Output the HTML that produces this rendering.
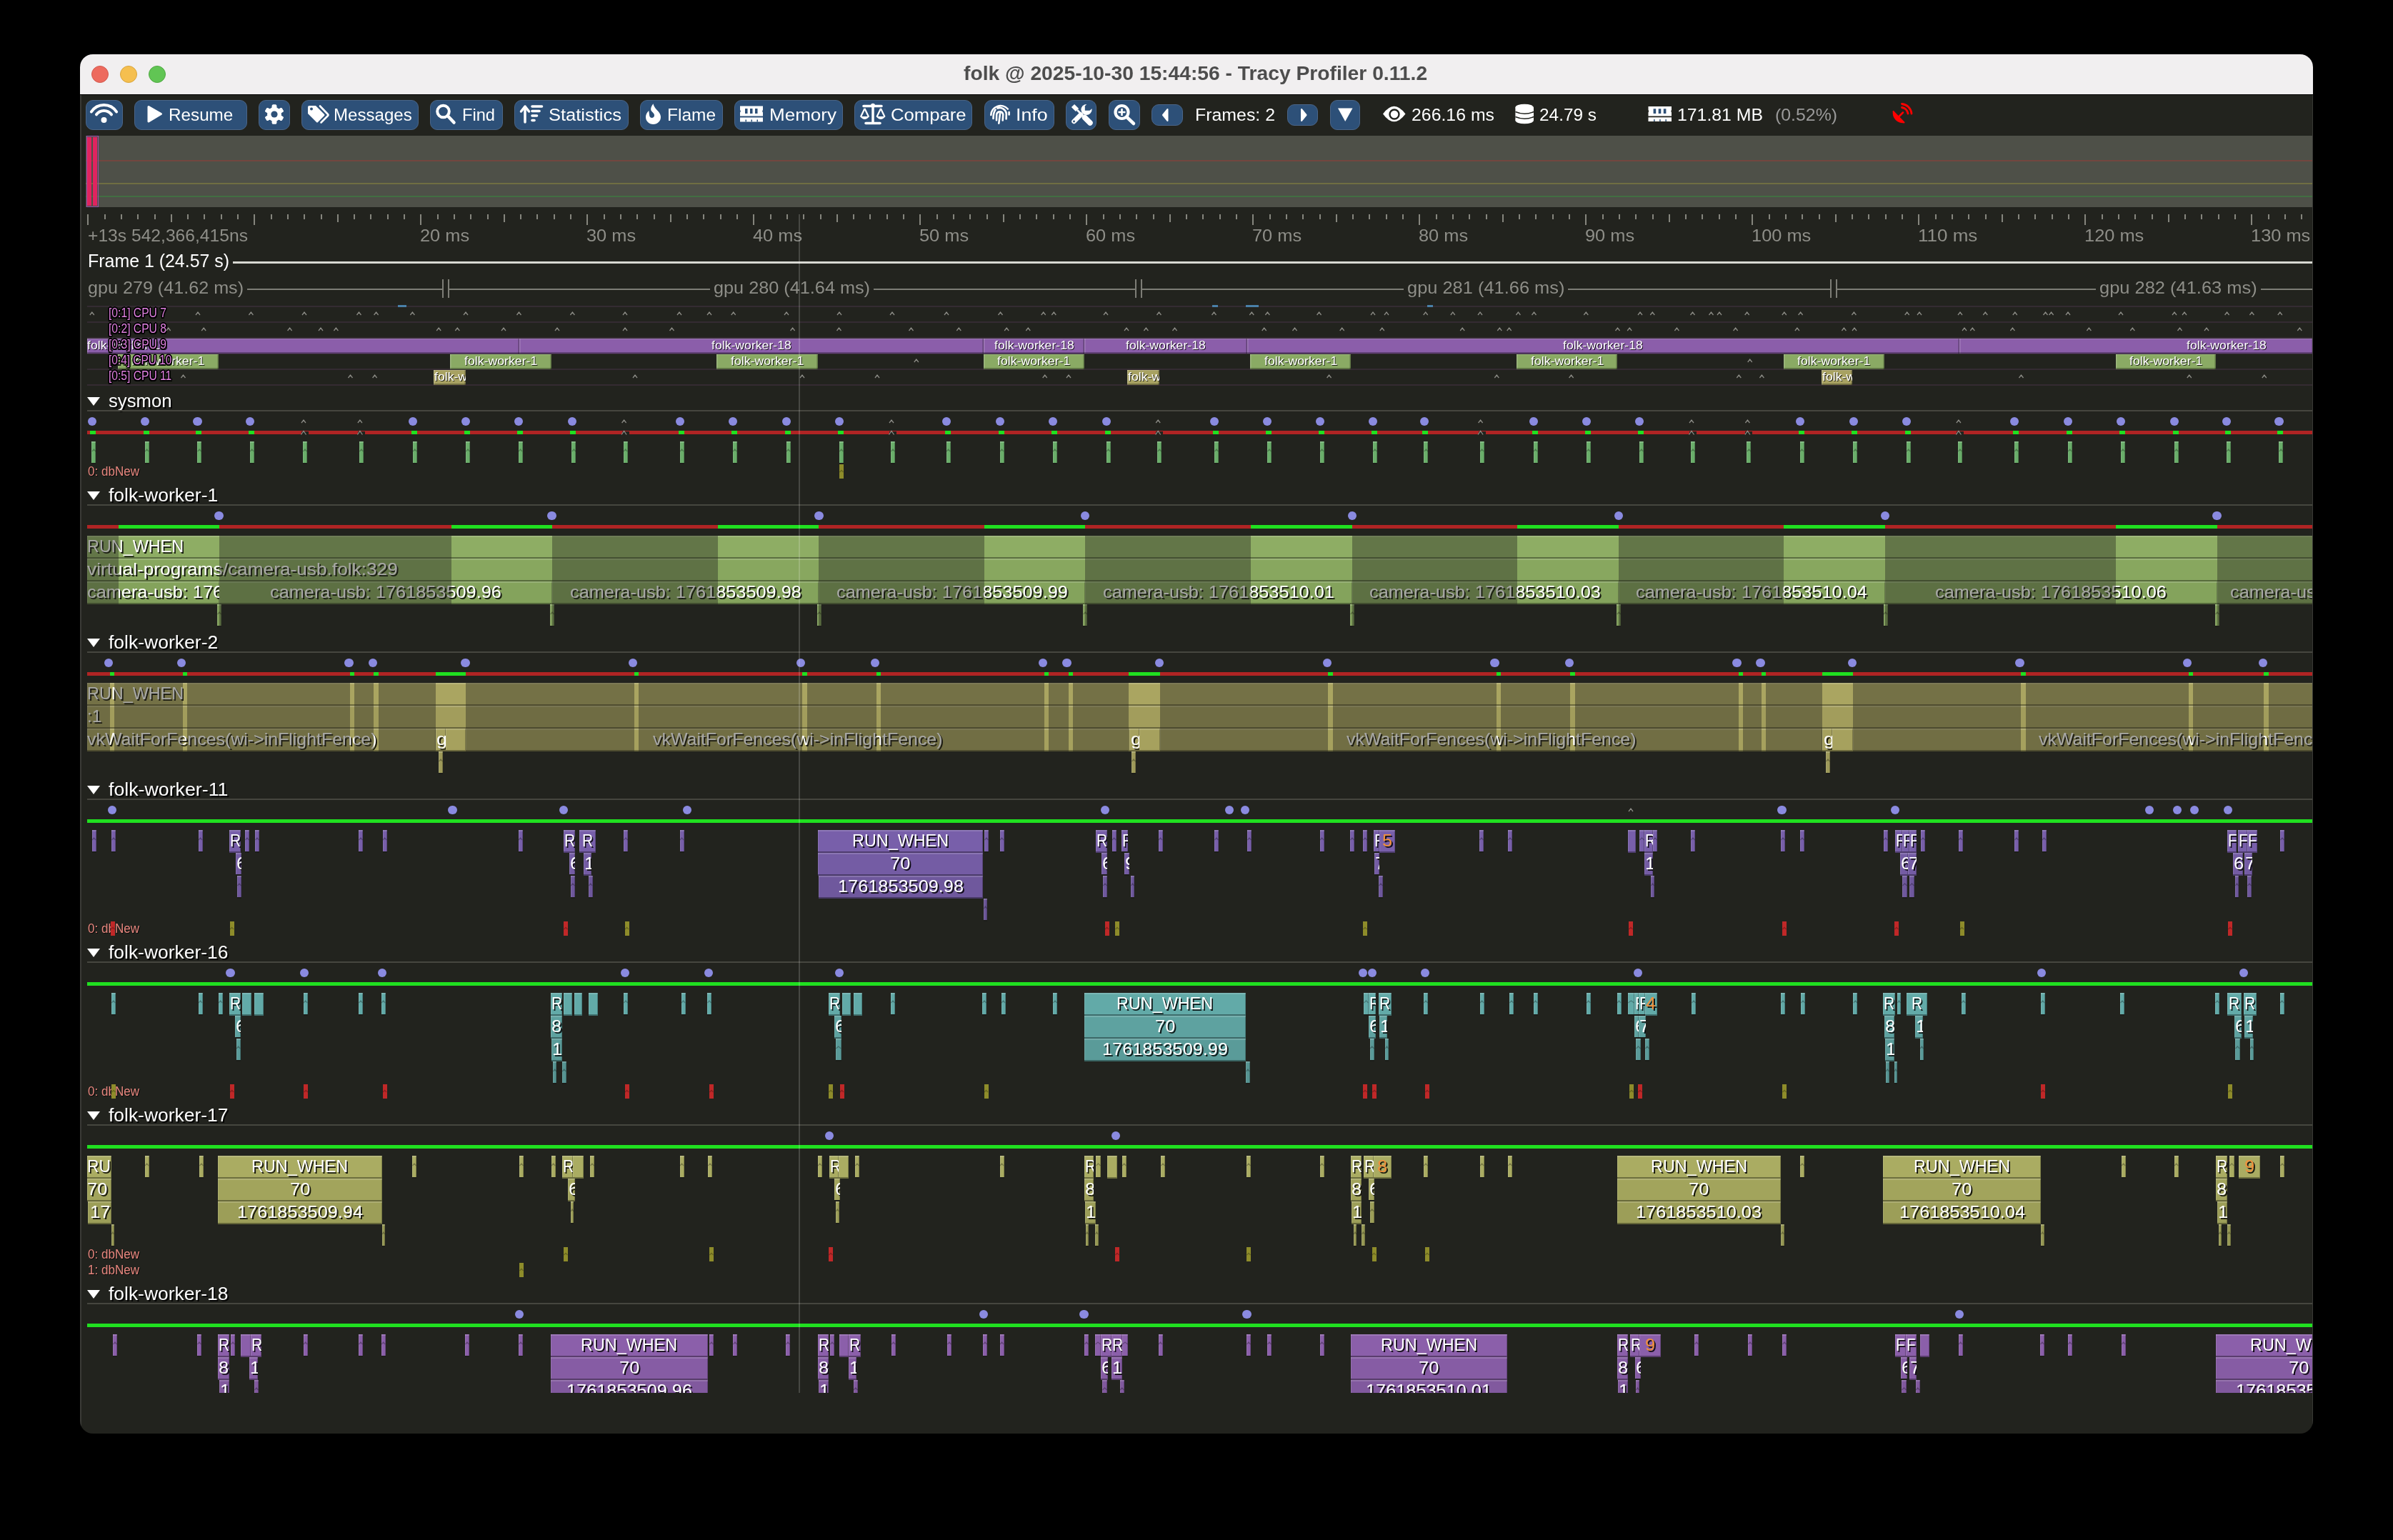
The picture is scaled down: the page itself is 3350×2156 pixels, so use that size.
<!DOCTYPE html><html><head><meta charset="utf-8"><style>
html,body{margin:0;padding:0;background:#000;width:3350px;height:2156px;overflow:hidden}
#win{position:absolute;left:0;top:0;width:3350px;height:2156px;clip-path:inset(76px 112px 149px 112px round 18px);will-change:transform}
#win div{position:absolute;box-sizing:content-box}
#bg{left:112px;top:76px;width:3126px;height:1931px;background:#22231e}
.t{transform-origin:0 0;white-space:nowrap;line-height:1;font-family:"Liberation Sans",sans-serif}
.title{font-weight:bold}
.btn{background:#2d5078;border:1px solid #4a6588;border-radius:10px}
.cb{overflow:hidden;box-shadow:inset 0 1px 0 rgba(255,255,255,0.18),inset 0 -2px 0 rgba(0,0,0,0.3),inset 1.5px 0 0 rgba(255,255,255,0.18),inset -1.5px 0 0 rgba(0,0,0,0.3)}
.ct{transform-origin:0 0;position:absolute;white-space:nowrap;font-family:"Liberation Sans",sans-serif;font-size:17px;line-height:19px;color:#fff;text-shadow:1px 1px 0 rgba(0,0,0,0.8)}
.cl{text-shadow:-1.5px -1.5px 0 #000,1.5px -1.5px 0 #000,-1.5px 1.5px 0 #000,1.5px 1.5px 0 #000,0 2px 0 #000,2px 0 0 #000,-2px 0 0 #000,0 -2px 0 #000}
.th{text-shadow:2px 2px 0 rgba(0,0,0,0.85)}
.lk{text-shadow:1px 1px 0 rgba(0,0,0,0.8)}
.tri{width:0;height:0;border-left:9px solid transparent;border-right:9px solid transparent;border-top:12px solid #fff}
.dot{width:12.4px;height:12.4px;border-radius:50%;background:#8a8ae0}
.z{height:30px;border-bottom:2px solid rgba(0,0,0,0.35);overflow:hidden;box-shadow:inset 0 2px 0 rgba(255,255,255,0.16),inset 1px 0 0 rgba(255,255,255,0.12),inset -1px 0 0 rgba(0,0,0,0.25)}
.zn{background-clip:padding-box;border-bottom-color:rgba(0,0,0,0.15)}
.zt{transform-origin:0 0;position:absolute;top:0;white-space:nowrap;font-family:"Liberation Sans",sans-serif;font-size:24.5px;line-height:30px;color:#fff;text-shadow:2px 2px 0 rgba(0,0,0,0.85)}
</style></head><body><div id="win"><div id="bg"></div><div style="left:112px;top:76px;width:3126px;height:56px;background:#f1eff0;"></div><div style="left:112px;top:132px;width:3126px;height:1px;background:#000;"></div><div style="left:128px;top:92px;width:24px;height:24px;border-radius:12px;background:#ed6a5e;box-sizing:border-box;border:1px solid #d35a4f"></div><div style="left:168px;top:92px;width:24px;height:24px;border-radius:12px;background:#f5bf4f;box-sizing:border-box;border:1px solid #d9a53c"></div><div style="left:208px;top:92px;width:24px;height:24px;border-radius:12px;background:#61c554;box-sizing:border-box;border:1px solid #4fa942"></div><div class="t title" style="left:1349px;top:88.8px;font-size:28px;color:#4d4d4d;transform:scaleX(1.0084);">folk @ 2025-10-30 15:44:56 - Tracy Profiler 0.11.2</div><div class="btn" style="left:120px;top:140px;width:50px;height:40px"></div><div class="btn" style="left:188px;top:140px;width:156px;height:40px"></div><div class="btn" style="left:362px;top:140px;width:42px;height:40px"></div><div class="btn" style="left:422px;top:140px;width:162px;height:40px"></div><div class="btn" style="left:602px;top:140px;width:100px;height:40px"></div><div class="btn" style="left:720px;top:140px;width:158px;height:40px"></div><div class="btn" style="left:896px;top:140px;width:114px;height:40px"></div><div class="btn" style="left:1028px;top:140px;width:150px;height:40px"></div><div class="btn" style="left:1196px;top:140px;width:163px;height:40px"></div><div class="btn" style="left:1378px;top:140px;width:96px;height:40px"></div><div class="btn" style="left:1492px;top:140px;width:41px;height:40px"></div><div class="btn" style="left:1552px;top:140px;width:42px;height:40px"></div><div class="btn" style="left:1612px;top:146px;width:42px;height:28px"></div><div class="btn" style="left:1802px;top:146px;width:41px;height:28px"></div><div class="btn" style="left:1862px;top:140px;width:40px;height:40px"></div><div class="t tb" style="left:236px;top:149.26px;font-size:24.5px;color:#fff;transform:scaleX(0.9899);">Resume</div><div class="t tb" style="left:467px;top:149.26px;font-size:24.5px;color:#fff;transform:scaleX(0.9825);">Messages</div><div class="t tb" style="left:647px;top:149.26px;font-size:24.5px;color:#fff;transform:scaleX(0.9652);">Find</div><div class="t tb" style="left:768px;top:149.26px;font-size:24.5px;color:#fff;transform:scaleX(1.0406);">Statistics</div><div class="t tb" style="left:934px;top:149.26px;font-size:24.5px;color:#fff;transform:scaleX(0.9991);">Flame</div><div class="t tb" style="left:1077px;top:149.26px;font-size:24.5px;color:#fff;transform:scaleX(1.0625);">Memory</div><div class="t tb" style="left:1247px;top:149.26px;font-size:24.5px;color:#fff;transform:scaleX(1.0474);">Compare</div><div class="t tb" style="left:1422px;top:149.26px;font-size:24.5px;color:#fff;transform:scaleX(1.0915);">Info</div><div class="t tb" style="left:1673px;top:149.26px;font-size:24.5px;color:#fff;transform:scaleX(1.0157);">Frames: 2</div><div class="t tb" style="left:1976px;top:149.26px;font-size:24.5px;color:#fff;transform:scaleX(1.0141);">266.16 ms</div><div class="t tb" style="left:2155px;top:149.26px;font-size:24.5px;color:#fff;transform:scaleX(0.9955);">24.79 s</div><div class="t tb" style="left:2348px;top:149.26px;font-size:24.5px;color:#fff;transform:scaleX(1.0128);">171.81 MB</div><div class="t tb" style="left:2485px;top:149.26px;font-size:24.5px;color:#9a9a9a;transform:scaleX(1.0142);">(0.52%)</div><div style="left:120px;top:190px;width:3118px;height:100px;background:#4e5048;"></div><div style="left:120px;top:224px;width:3118px;height:2px;background:#73463f;"></div><div style="left:120px;top:256px;width:3118px;height:2px;background:#6f6e42;"></div><div style="left:120px;top:274px;width:3118px;height:2px;background:#426e42;"></div><div style="left:121px;top:190px;width:17px;height:100px;background:transparent;box-sizing:border-box;border:1px solid #9a50a8"></div><div style="left:122px;top:192px;width:6px;height:96px;background:#e0245f;"></div><div style="left:130px;top:192px;width:6px;height:96px;background:#e0245f;"></div><div style="left:122.3px;top:300px;width:2px;height:14.5px;background:#85857d;"></div><div style="left:145.6px;top:300px;width:2px;height:6.5px;background:#85857d;"></div><div style="left:168.9px;top:300px;width:2px;height:6.5px;background:#85857d;"></div><div style="left:192.2px;top:300px;width:2px;height:6.5px;background:#85857d;"></div><div style="left:215.5px;top:300px;width:2px;height:6.5px;background:#85857d;"></div><div style="left:238.8px;top:300px;width:2px;height:11px;background:#85857d;"></div><div style="left:262.1px;top:300px;width:2px;height:6.5px;background:#85857d;"></div><div style="left:285.4px;top:300px;width:2px;height:6.5px;background:#85857d;"></div><div style="left:308.7px;top:300px;width:2px;height:6.5px;background:#85857d;"></div><div style="left:332px;top:300px;width:2px;height:6.5px;background:#85857d;"></div><div style="left:355.3px;top:300px;width:2px;height:14.5px;background:#85857d;"></div><div style="left:378.6px;top:300px;width:2px;height:6.5px;background:#85857d;"></div><div style="left:401.9px;top:300px;width:2px;height:6.5px;background:#85857d;"></div><div style="left:425.2px;top:300px;width:2px;height:6.5px;background:#85857d;"></div><div style="left:448.5px;top:300px;width:2px;height:6.5px;background:#85857d;"></div><div style="left:471.8px;top:300px;width:2px;height:11px;background:#85857d;"></div><div style="left:495.1px;top:300px;width:2px;height:6.5px;background:#85857d;"></div><div style="left:518.4px;top:300px;width:2px;height:6.5px;background:#85857d;"></div><div style="left:541.7px;top:300px;width:2px;height:6.5px;background:#85857d;"></div><div style="left:565px;top:300px;width:2px;height:6.5px;background:#85857d;"></div><div style="left:588.3px;top:300px;width:2px;height:14.5px;background:#85857d;"></div><div style="left:611.6px;top:300px;width:2px;height:6.5px;background:#85857d;"></div><div style="left:634.9px;top:300px;width:2px;height:6.5px;background:#85857d;"></div><div style="left:658.2px;top:300px;width:2px;height:6.5px;background:#85857d;"></div><div style="left:681.5px;top:300px;width:2px;height:6.5px;background:#85857d;"></div><div style="left:704.8px;top:300px;width:2px;height:11px;background:#85857d;"></div><div style="left:728.1px;top:300px;width:2px;height:6.5px;background:#85857d;"></div><div style="left:751.4px;top:300px;width:2px;height:6.5px;background:#85857d;"></div><div style="left:774.7px;top:300px;width:2px;height:6.5px;background:#85857d;"></div><div style="left:798px;top:300px;width:2px;height:6.5px;background:#85857d;"></div><div style="left:821.3px;top:300px;width:2px;height:14.5px;background:#85857d;"></div><div style="left:844.6px;top:300px;width:2px;height:6.5px;background:#85857d;"></div><div style="left:867.9px;top:300px;width:2px;height:6.5px;background:#85857d;"></div><div style="left:891.2px;top:300px;width:2px;height:6.5px;background:#85857d;"></div><div style="left:914.5px;top:300px;width:2px;height:6.5px;background:#85857d;"></div><div style="left:937.8px;top:300px;width:2px;height:11px;background:#85857d;"></div><div style="left:961.1px;top:300px;width:2px;height:6.5px;background:#85857d;"></div><div style="left:984.4px;top:300px;width:2px;height:6.5px;background:#85857d;"></div><div style="left:1007.7px;top:300px;width:2px;height:6.5px;background:#85857d;"></div><div style="left:1031px;top:300px;width:2px;height:6.5px;background:#85857d;"></div><div style="left:1054.3px;top:300px;width:2px;height:14.5px;background:#85857d;"></div><div style="left:1077.6px;top:300px;width:2px;height:6.5px;background:#85857d;"></div><div style="left:1100.9px;top:300px;width:2px;height:6.5px;background:#85857d;"></div><div style="left:1124.2px;top:300px;width:2px;height:6.5px;background:#85857d;"></div><div style="left:1147.5px;top:300px;width:2px;height:6.5px;background:#85857d;"></div><div style="left:1170.8px;top:300px;width:2px;height:11px;background:#85857d;"></div><div style="left:1194.1px;top:300px;width:2px;height:6.5px;background:#85857d;"></div><div style="left:1217.4px;top:300px;width:2px;height:6.5px;background:#85857d;"></div><div style="left:1240.7px;top:300px;width:2px;height:6.5px;background:#85857d;"></div><div style="left:1264px;top:300px;width:2px;height:6.5px;background:#85857d;"></div><div style="left:1287.3px;top:300px;width:2px;height:14.5px;background:#85857d;"></div><div style="left:1310.6px;top:300px;width:2px;height:6.5px;background:#85857d;"></div><div style="left:1333.9px;top:300px;width:2px;height:6.5px;background:#85857d;"></div><div style="left:1357.2px;top:300px;width:2px;height:6.5px;background:#85857d;"></div><div style="left:1380.5px;top:300px;width:2px;height:6.5px;background:#85857d;"></div><div style="left:1403.8px;top:300px;width:2px;height:11px;background:#85857d;"></div><div style="left:1427.1px;top:300px;width:2px;height:6.5px;background:#85857d;"></div><div style="left:1450.4px;top:300px;width:2px;height:6.5px;background:#85857d;"></div><div style="left:1473.7px;top:300px;width:2px;height:6.5px;background:#85857d;"></div><div style="left:1497px;top:300px;width:2px;height:6.5px;background:#85857d;"></div><div style="left:1520.3px;top:300px;width:2px;height:14.5px;background:#85857d;"></div><div style="left:1543.6px;top:300px;width:2px;height:6.5px;background:#85857d;"></div><div style="left:1566.9px;top:300px;width:2px;height:6.5px;background:#85857d;"></div><div style="left:1590.2px;top:300px;width:2px;height:6.5px;background:#85857d;"></div><div style="left:1613.5px;top:300px;width:2px;height:6.5px;background:#85857d;"></div><div style="left:1636.8px;top:300px;width:2px;height:11px;background:#85857d;"></div><div style="left:1660.1px;top:300px;width:2px;height:6.5px;background:#85857d;"></div><div style="left:1683.4px;top:300px;width:2px;height:6.5px;background:#85857d;"></div><div style="left:1706.7px;top:300px;width:2px;height:6.5px;background:#85857d;"></div><div style="left:1730px;top:300px;width:2px;height:6.5px;background:#85857d;"></div><div style="left:1753.3px;top:300px;width:2px;height:14.5px;background:#85857d;"></div><div style="left:1776.6px;top:300px;width:2px;height:6.5px;background:#85857d;"></div><div style="left:1799.9px;top:300px;width:2px;height:6.5px;background:#85857d;"></div><div style="left:1823.2px;top:300px;width:2px;height:6.5px;background:#85857d;"></div><div style="left:1846.5px;top:300px;width:2px;height:6.5px;background:#85857d;"></div><div style="left:1869.8px;top:300px;width:2px;height:11px;background:#85857d;"></div><div style="left:1893.1px;top:300px;width:2px;height:6.5px;background:#85857d;"></div><div style="left:1916.4px;top:300px;width:2px;height:6.5px;background:#85857d;"></div><div style="left:1939.7px;top:300px;width:2px;height:6.5px;background:#85857d;"></div><div style="left:1963px;top:300px;width:2px;height:6.5px;background:#85857d;"></div><div style="left:1986.3px;top:300px;width:2px;height:14.5px;background:#85857d;"></div><div style="left:2009.6px;top:300px;width:2px;height:6.5px;background:#85857d;"></div><div style="left:2032.9px;top:300px;width:2px;height:6.5px;background:#85857d;"></div><div style="left:2056.2px;top:300px;width:2px;height:6.5px;background:#85857d;"></div><div style="left:2079.5px;top:300px;width:2px;height:6.5px;background:#85857d;"></div><div style="left:2102.8px;top:300px;width:2px;height:11px;background:#85857d;"></div><div style="left:2126.1px;top:300px;width:2px;height:6.5px;background:#85857d;"></div><div style="left:2149.4px;top:300px;width:2px;height:6.5px;background:#85857d;"></div><div style="left:2172.7px;top:300px;width:2px;height:6.5px;background:#85857d;"></div><div style="left:2196px;top:300px;width:2px;height:6.5px;background:#85857d;"></div><div style="left:2219.3px;top:300px;width:2px;height:14.5px;background:#85857d;"></div><div style="left:2242.6px;top:300px;width:2px;height:6.5px;background:#85857d;"></div><div style="left:2265.9px;top:300px;width:2px;height:6.5px;background:#85857d;"></div><div style="left:2289.2px;top:300px;width:2px;height:6.5px;background:#85857d;"></div><div style="left:2312.5px;top:300px;width:2px;height:6.5px;background:#85857d;"></div><div style="left:2335.8px;top:300px;width:2px;height:11px;background:#85857d;"></div><div style="left:2359.1px;top:300px;width:2px;height:6.5px;background:#85857d;"></div><div style="left:2382.4px;top:300px;width:2px;height:6.5px;background:#85857d;"></div><div style="left:2405.7px;top:300px;width:2px;height:6.5px;background:#85857d;"></div><div style="left:2429px;top:300px;width:2px;height:6.5px;background:#85857d;"></div><div style="left:2452.3px;top:300px;width:2px;height:14.5px;background:#85857d;"></div><div style="left:2475.6px;top:300px;width:2px;height:6.5px;background:#85857d;"></div><div style="left:2498.9px;top:300px;width:2px;height:6.5px;background:#85857d;"></div><div style="left:2522.2px;top:300px;width:2px;height:6.5px;background:#85857d;"></div><div style="left:2545.5px;top:300px;width:2px;height:6.5px;background:#85857d;"></div><div style="left:2568.8px;top:300px;width:2px;height:11px;background:#85857d;"></div><div style="left:2592.1px;top:300px;width:2px;height:6.5px;background:#85857d;"></div><div style="left:2615.4px;top:300px;width:2px;height:6.5px;background:#85857d;"></div><div style="left:2638.7px;top:300px;width:2px;height:6.5px;background:#85857d;"></div><div style="left:2662px;top:300px;width:2px;height:6.5px;background:#85857d;"></div><div style="left:2685.3px;top:300px;width:2px;height:14.5px;background:#85857d;"></div><div style="left:2708.6px;top:300px;width:2px;height:6.5px;background:#85857d;"></div><div style="left:2731.9px;top:300px;width:2px;height:6.5px;background:#85857d;"></div><div style="left:2755.2px;top:300px;width:2px;height:6.5px;background:#85857d;"></div><div style="left:2778.5px;top:300px;width:2px;height:6.5px;background:#85857d;"></div><div style="left:2801.8px;top:300px;width:2px;height:11px;background:#85857d;"></div><div style="left:2825.1px;top:300px;width:2px;height:6.5px;background:#85857d;"></div><div style="left:2848.4px;top:300px;width:2px;height:6.5px;background:#85857d;"></div><div style="left:2871.7px;top:300px;width:2px;height:6.5px;background:#85857d;"></div><div style="left:2895px;top:300px;width:2px;height:6.5px;background:#85857d;"></div><div style="left:2918.3px;top:300px;width:2px;height:14.5px;background:#85857d;"></div><div style="left:2941.6px;top:300px;width:2px;height:6.5px;background:#85857d;"></div><div style="left:2964.9px;top:300px;width:2px;height:6.5px;background:#85857d;"></div><div style="left:2988.2px;top:300px;width:2px;height:6.5px;background:#85857d;"></div><div style="left:3011.5px;top:300px;width:2px;height:6.5px;background:#85857d;"></div><div style="left:3034.8px;top:300px;width:2px;height:11px;background:#85857d;"></div><div style="left:3058.1px;top:300px;width:2px;height:6.5px;background:#85857d;"></div><div style="left:3081.4px;top:300px;width:2px;height:6.5px;background:#85857d;"></div><div style="left:3104.7px;top:300px;width:2px;height:6.5px;background:#85857d;"></div><div style="left:3128px;top:300px;width:2px;height:6.5px;background:#85857d;"></div><div style="left:3151.3px;top:300px;width:2px;height:14.5px;background:#85857d;"></div><div style="left:3174.6px;top:300px;width:2px;height:6.5px;background:#85857d;"></div><div style="left:3197.9px;top:300px;width:2px;height:6.5px;background:#85857d;"></div><div style="left:3221.2px;top:300px;width:2px;height:6.5px;background:#85857d;"></div><div class="t rl" style="left:123px;top:317.76px;font-size:24.5px;color:#8e8e88;transform:scaleX(1.0057);">+13s 542,366,415ns</div><div class="t rl" style="left:588.3px;top:317.76px;font-size:24.5px;color:#8e8e88;transform:scaleX(1.0365);">20 ms</div><div class="t rl" style="left:821.3px;top:317.76px;font-size:24.5px;color:#8e8e88;transform:scaleX(1.0365);">30 ms</div><div class="t rl" style="left:1054.3px;top:317.76px;font-size:24.5px;color:#8e8e88;transform:scaleX(1.0365);">40 ms</div><div class="t rl" style="left:1287.3px;top:317.76px;font-size:24.5px;color:#8e8e88;transform:scaleX(1.0365);">50 ms</div><div class="t rl" style="left:1520.3px;top:317.76px;font-size:24.5px;color:#8e8e88;transform:scaleX(1.0365);">60 ms</div><div class="t rl" style="left:1753.3px;top:317.76px;font-size:24.5px;color:#8e8e88;transform:scaleX(1.0365);">70 ms</div><div class="t rl" style="left:1986.3px;top:317.76px;font-size:24.5px;color:#8e8e88;transform:scaleX(1.0365);">80 ms</div><div class="t rl" style="left:2219.3px;top:317.76px;font-size:24.5px;color:#8e8e88;transform:scaleX(1.0365);">90 ms</div><div class="t rl" style="left:2452.3px;top:317.76px;font-size:24.5px;color:#8e8e88;transform:scaleX(1.0369);">100 ms</div><div class="t rl" style="left:2685.3px;top:317.76px;font-size:24.5px;color:#8e8e88;transform:scaleX(1.0609);">110 ms</div><div class="t rl" style="left:2918.3px;top:317.76px;font-size:24.5px;color:#8e8e88;transform:scaleX(1.0369);">120 ms</div><div class="t rl" style="left:3151.3px;top:317.76px;font-size:24.5px;color:#8e8e88;transform:scaleX(1.0369);">130 ms</div><div class="t fr" style="left:123px;top:353.34px;font-size:25px;color:#fff;transform:scaleX(0.9967);">Frame 1 (24.57 s)</div><div style="left:326px;top:365.5px;width:2912px;height:3px;background:#d8d8d2;"></div><div class="t gp" style="left:123px;top:391.26px;font-size:24.5px;color:#8e8e88;transform:scaleX(1.0262);">gpu 279 (41.62 ms)</div><div class="t gp" style="left:998.6px;top:391.26px;font-size:24.5px;color:#8e8e88;transform:scaleX(1.0309);">gpu 280 (41.64 ms)</div><div class="t gp" style="left:1969.6px;top:391.26px;font-size:24.5px;color:#8e8e88;transform:scaleX(1.0375);">gpu 281 (41.66 ms)</div><div class="t gp" style="left:2939px;top:391.26px;font-size:24.5px;color:#8e8e88;transform:scaleX(1.0389);">gpu 282 (41.63 ms)</div><div style="left:346px;top:404px;width:274px;height:2px;background:#7d7d76;"></div><div style="left:628px;top:404px;width:365.6px;height:2px;background:#7d7d76;"></div><div style="left:1222.6px;top:404px;width:367.4px;height:2px;background:#7d7d76;"></div><div style="left:1598px;top:404px;width:366.6px;height:2px;background:#7d7d76;"></div><div style="left:2195px;top:404px;width:368px;height:2px;background:#7d7d76;"></div><div style="left:2571px;top:404px;width:363px;height:2px;background:#7d7d76;"></div><div style="left:3164.7px;top:404px;width:73.3px;height:2px;background:#7d7d76;"></div><div style="left:619px;top:391px;width:2px;height:26px;background:#7d7d76;"></div><div style="left:627px;top:391px;width:2px;height:26px;background:#7d7d76;"></div><div style="left:1589px;top:391px;width:2px;height:26px;background:#7d7d76;"></div><div style="left:1597px;top:391px;width:2px;height:26px;background:#7d7d76;"></div><div style="left:2562px;top:391px;width:2px;height:26px;background:#7d7d76;"></div><div style="left:2570px;top:391px;width:2px;height:26px;background:#7d7d76;"></div><div style="left:122px;top:428px;width:3116px;height:2px;background:#342b32;"></div><div style="left:122px;top:450px;width:3116px;height:2px;background:#342b32;"></div><div style="left:122px;top:472px;width:3116px;height:2px;background:#342b32;"></div><div style="left:122px;top:494px;width:3116px;height:2px;background:#342b32;"></div><div style="left:122px;top:516px;width:3116px;height:2px;background:#342b32;"></div><div style="left:122px;top:538px;width:3116px;height:2px;background:#342b32;"></div><div class="cb" style="left:122px;top:474px;width:605px;height:21px;background:#8b5eaa"><div class="ct" style="left:0px;transform:scaleX(1.0384)">folk-worker-18</div></div><div class="cb" style="left:727px;top:474px;width:650px;height:21px;background:#8b5eaa"><div class="ct" style="left:269.09px;transform:scaleX(1.0384)">folk-worker-18</div></div><div class="cb" style="left:1377px;top:474px;width:141px;height:21px;background:#8b5eaa"><div class="ct" style="left:14.59px;transform:scaleX(1.0384)">folk-worker-18</div></div><div class="cb" style="left:1518px;top:474px;width:227.6px;height:21px;background:#8b5eaa"><div class="ct" style="left:57.89px;transform:scaleX(1.0384)">folk-worker-18</div></div><div class="cb" style="left:1745.6px;top:474px;width:997.4px;height:21px;background:#8b5eaa"><div class="ct" style="left:442.79px;transform:scaleX(1.0384)">folk-worker-18</div></div><div class="cb" style="left:2743px;top:474px;width:495px;height:21px;background:#8b5eaa"><div class="ct" style="left:318px;transform:scaleX(1.0384)">folk-worker-18</div></div><div class="cb" style="left:165px;top:496px;width:141px;height:21px;background:#8aaa64"><div class="ct" style="left:19.32px;transform:scaleX(1.0420)">folk-worker-1</div></div><div class="cb" style="left:630px;top:496px;width:142px;height:21px;background:#8aaa64"><div class="ct" style="left:19.82px;transform:scaleX(1.0420)">folk-worker-1</div></div><div class="cb" style="left:1003px;top:496px;width:142px;height:21px;background:#8aaa64"><div class="ct" style="left:19.82px;transform:scaleX(1.0420)">folk-worker-1</div></div><div class="cb" style="left:1377px;top:496px;width:140.5px;height:21px;background:#8aaa64"><div class="ct" style="left:19.07px;transform:scaleX(1.0420)">folk-worker-1</div></div><div class="cb" style="left:1750px;top:496px;width:141.4px;height:21px;background:#8aaa64"><div class="ct" style="left:19.52px;transform:scaleX(1.0420)">folk-worker-1</div></div><div class="cb" style="left:2123.4px;top:496px;width:141.1px;height:21px;background:#8aaa64"><div class="ct" style="left:19.37px;transform:scaleX(1.0420)">folk-worker-1</div></div><div class="cb" style="left:2496.5px;top:496px;width:141.1px;height:21px;background:#8aaa64"><div class="ct" style="left:19.37px;transform:scaleX(1.0420)">folk-worker-1</div></div><div class="cb" style="left:2962px;top:496px;width:140px;height:21px;background:#8aaa64"><div class="ct" style="left:18.82px;transform:scaleX(1.0420)">folk-worker-1</div></div><div class="cb" style="left:607px;top:518px;width:44.6px;height:21px;background:#a8a262"><div class="ct" style="left:1px;transform:scaleX(1.0384)">folk-worker-18</div></div><div class="cb" style="left:1578px;top:518px;width:45px;height:21px;background:#a8a262"><div class="ct" style="left:1px;transform:scaleX(1.0384)">folk-worker-18</div></div><div class="cb" style="left:2550px;top:518px;width:42.8px;height:21px;background:#a8a262"><div class="ct" style="left:1px;transform:scaleX(1.0384)">folk-worker-18</div></div><div style="left:557px;top:427px;width:12px;height:3px;background:#4a80a8;"></div><div style="left:1697px;top:427px;width:8px;height:3px;background:#4a80a8;"></div><div style="left:1744px;top:427px;width:18px;height:3px;background:#4a80a8;"></div><div style="left:1998px;top:427px;width:8px;height:3px;background:#4a80a8;"></div><div class="t cl" style="left:152px;top:429.26px;font-size:18px;color:#e080e0;transform:scaleX(0.8706);">[0:1] CPU 7</div><div class="t cl" style="left:152px;top:451.26px;font-size:18px;color:#e080e0;transform:scaleX(0.8706);">[0:2] CPU 8</div><div class="t cl" style="left:152px;top:473.26px;font-size:18px;color:#e080e0;transform:scaleX(0.8706);">[0:3] CPU 9</div><div class="t cl" style="left:152px;top:495.26px;font-size:18px;color:#e080e0;transform:scaleX(0.8569);">[0:4] CPU 10</div><div class="t cl" style="left:152px;top:517.26px;font-size:18px;color:#e080e0;transform:scaleX(0.8681);">[0:5] CPU 11</div><div class="tri" style="left:122px;top:556px"></div><div class="t th" style="left:152px;top:548.84px;font-size:25px;color:#fff;transform:scaleX(1.0272);">sysmon</div><div style="left:122px;top:574px;width:3116px;height:2px;background:#46463f;"></div><div style="left:122px;top:603.2px;width:3116px;height:5px;background:#b02424;"></div><div style="left:126.4px;top:603.2px;width:8px;height:5px;background:#20e020;"></div><div style="left:200.6px;top:603.2px;width:8px;height:5px;background:#20e020;"></div><div style="left:274.2px;top:603.2px;width:8px;height:5px;background:#20e020;"></div><div style="left:347.7px;top:603.2px;width:8px;height:5px;background:#20e020;"></div><div style="left:575.7px;top:603.2px;width:8px;height:5px;background:#20e020;"></div><div style="left:650px;top:603.2px;width:8px;height:5px;background:#20e020;"></div><div style="left:723.5px;top:603.2px;width:8px;height:5px;background:#20e020;"></div><div style="left:798.4px;top:603.2px;width:8px;height:5px;background:#20e020;"></div><div style="left:949.5px;top:603.2px;width:8px;height:5px;background:#20e020;"></div><div style="left:1023.7px;top:603.2px;width:8px;height:5px;background:#20e020;"></div><div style="left:1098.6px;top:603.2px;width:8px;height:5px;background:#20e020;"></div><div style="left:1172.8px;top:603.2px;width:8px;height:5px;background:#20e020;"></div><div style="left:1322.6px;top:603.2px;width:8px;height:5px;background:#20e020;"></div><div style="left:1397.5px;top:603.2px;width:8px;height:5px;background:#20e020;"></div><div style="left:1471.7px;top:603.2px;width:8px;height:5px;background:#20e020;"></div><div style="left:1546.6px;top:603.2px;width:8px;height:5px;background:#20e020;"></div><div style="left:1698px;top:603.2px;width:8px;height:5px;background:#20e020;"></div><div style="left:1772px;top:603.2px;width:8px;height:5px;background:#20e020;"></div><div style="left:1845.6px;top:603.2px;width:8px;height:5px;background:#20e020;"></div><div style="left:1919.8px;top:603.2px;width:8px;height:5px;background:#20e020;"></div><div style="left:1991.4px;top:603.2px;width:8px;height:5px;background:#20e020;"></div><div style="left:2144.5px;top:603.2px;width:8px;height:5px;background:#20e020;"></div><div style="left:2218.7px;top:603.2px;width:8px;height:5px;background:#20e020;"></div><div style="left:2292.9px;top:603.2px;width:8px;height:5px;background:#20e020;"></div><div style="left:2517.5px;top:603.2px;width:8px;height:5px;background:#20e020;"></div><div style="left:2592.4px;top:603.2px;width:8px;height:5px;background:#20e020;"></div><div style="left:2666.7px;top:603.2px;width:8px;height:5px;background:#20e020;"></div><div style="left:2817.8px;top:603.2px;width:8px;height:5px;background:#20e020;"></div><div style="left:2892.7px;top:603.2px;width:8px;height:5px;background:#20e020;"></div><div style="left:2966.9px;top:603.2px;width:8px;height:5px;background:#20e020;"></div><div style="left:3041.8px;top:603.2px;width:8px;height:5px;background:#20e020;"></div><div style="left:3114.7px;top:603.2px;width:8px;height:5px;background:#20e020;"></div><div style="left:3188.2px;top:603.2px;width:8px;height:5px;background:#20e020;"></div><div class="dot" style="left:122.5px;top:583.8px"></div><div class="z zn" style="left:128.4px;top:618px;width:6px;background-color:#6aae6a"></div><div class="dot" style="left:196.7px;top:583.8px"></div><div class="z zn" style="left:202.6px;top:618px;width:6px;background-color:#6aae6a"></div><div class="dot" style="left:270.3px;top:583.8px"></div><div class="z zn" style="left:276.2px;top:618px;width:6px;background-color:#6aae6a"></div><div class="dot" style="left:343.8px;top:583.8px"></div><div class="z zn" style="left:349.7px;top:618px;width:6px;background-color:#6aae6a"></div><div style="left:422px;top:603.5px;width:10px;height:5px;background:#22231e;"></div><div class="z zn" style="left:424px;top:618px;width:6px;background-color:#6aae6a"></div><div style="left:500.9px;top:603.5px;width:10px;height:5px;background:#22231e;"></div><div class="z zn" style="left:502.9px;top:618px;width:6px;background-color:#6aae6a"></div><div class="dot" style="left:571.8px;top:583.8px"></div><div class="z zn" style="left:577.7px;top:618px;width:6px;background-color:#6aae6a"></div><div class="dot" style="left:646.1px;top:583.8px"></div><div class="z zn" style="left:652px;top:618px;width:6px;background-color:#6aae6a"></div><div class="dot" style="left:719.6px;top:583.8px"></div><div class="z zn" style="left:725.5px;top:618px;width:6px;background-color:#6aae6a"></div><div class="dot" style="left:794.5px;top:583.8px"></div><div class="z zn" style="left:800.4px;top:618px;width:6px;background-color:#6aae6a"></div><div style="left:870.6px;top:603.5px;width:10px;height:5px;background:#22231e;"></div><div class="z zn" style="left:872.6px;top:618px;width:6px;background-color:#6aae6a"></div><div class="dot" style="left:945.6px;top:583.8px"></div><div class="z zn" style="left:951.5px;top:618px;width:6px;background-color:#6aae6a"></div><div class="dot" style="left:1019.8px;top:583.8px"></div><div class="z zn" style="left:1025.7px;top:618px;width:6px;background-color:#6aae6a"></div><div class="dot" style="left:1094.7px;top:583.8px"></div><div class="z zn" style="left:1100.6px;top:618px;width:6px;background-color:#6aae6a"></div><div class="dot" style="left:1168.9px;top:583.8px"></div><div class="z zn" style="left:1174.8px;top:618px;width:6px;background-color:#6aae6a"></div><div style="left:1245px;top:603.5px;width:10px;height:5px;background:#22231e;"></div><div class="z zn" style="left:1247px;top:618px;width:6px;background-color:#6aae6a"></div><div class="dot" style="left:1318.7px;top:583.8px"></div><div class="z zn" style="left:1324.6px;top:618px;width:6px;background-color:#6aae6a"></div><div class="dot" style="left:1393.6px;top:583.8px"></div><div class="z zn" style="left:1399.5px;top:618px;width:6px;background-color:#6aae6a"></div><div class="dot" style="left:1467.8px;top:583.8px"></div><div class="z zn" style="left:1473.7px;top:618px;width:6px;background-color:#6aae6a"></div><div class="dot" style="left:1542.7px;top:583.8px"></div><div class="z zn" style="left:1548.6px;top:618px;width:6px;background-color:#6aae6a"></div><div style="left:1618.2px;top:603.5px;width:10px;height:5px;background:#22231e;"></div><div class="z zn" style="left:1620.2px;top:618px;width:6px;background-color:#6aae6a"></div><div class="dot" style="left:1694.1px;top:583.8px"></div><div class="z zn" style="left:1700px;top:618px;width:6px;background-color:#6aae6a"></div><div class="dot" style="left:1768.1px;top:583.8px"></div><div class="z zn" style="left:1774px;top:618px;width:6px;background-color:#6aae6a"></div><div class="dot" style="left:1841.7px;top:583.8px"></div><div class="z zn" style="left:1847.6px;top:618px;width:6px;background-color:#6aae6a"></div><div class="dot" style="left:1915.9px;top:583.8px"></div><div class="z zn" style="left:1921.8px;top:618px;width:6px;background-color:#6aae6a"></div><div class="dot" style="left:1987.5px;top:583.8px"></div><div class="z zn" style="left:1993.4px;top:618px;width:6px;background-color:#6aae6a"></div><div style="left:2069.6px;top:603.5px;width:10px;height:5px;background:#22231e;"></div><div class="z zn" style="left:2071.6px;top:618px;width:6px;background-color:#6aae6a"></div><div class="dot" style="left:2140.6px;top:583.8px"></div><div class="z zn" style="left:2146.5px;top:618px;width:6px;background-color:#6aae6a"></div><div class="dot" style="left:2214.8px;top:583.8px"></div><div class="z zn" style="left:2220.7px;top:618px;width:6px;background-color:#6aae6a"></div><div class="dot" style="left:2289px;top:583.8px"></div><div class="z zn" style="left:2294.9px;top:618px;width:6px;background-color:#6aae6a"></div><div style="left:2365px;top:603.5px;width:10px;height:5px;background:#22231e;"></div><div class="z zn" style="left:2367px;top:618px;width:6px;background-color:#6aae6a"></div><div style="left:2443.4px;top:603.5px;width:10px;height:5px;background:#22231e;"></div><div class="z zn" style="left:2445.4px;top:618px;width:6px;background-color:#6aae6a"></div><div class="dot" style="left:2513.6px;top:583.8px"></div><div class="z zn" style="left:2519.5px;top:618px;width:6px;background-color:#6aae6a"></div><div class="dot" style="left:2588.5px;top:583.8px"></div><div class="z zn" style="left:2594.4px;top:618px;width:6px;background-color:#6aae6a"></div><div class="dot" style="left:2662.8px;top:583.8px"></div><div class="z zn" style="left:2668.7px;top:618px;width:6px;background-color:#6aae6a"></div><div style="left:2738.9px;top:603.5px;width:10px;height:5px;background:#22231e;"></div><div class="z zn" style="left:2740.9px;top:618px;width:6px;background-color:#6aae6a"></div><div class="dot" style="left:2813.9px;top:583.8px"></div><div class="z zn" style="left:2819.8px;top:618px;width:6px;background-color:#6aae6a"></div><div class="dot" style="left:2888.8px;top:583.8px"></div><div class="z zn" style="left:2894.7px;top:618px;width:6px;background-color:#6aae6a"></div><div class="dot" style="left:2963px;top:583.8px"></div><div class="z zn" style="left:2968.9px;top:618px;width:6px;background-color:#6aae6a"></div><div class="dot" style="left:3037.9px;top:583.8px"></div><div class="z zn" style="left:3043.8px;top:618px;width:6px;background-color:#6aae6a"></div><div class="dot" style="left:3110.8px;top:583.8px"></div><div class="z zn" style="left:3116.7px;top:618px;width:6px;background-color:#6aae6a"></div><div class="dot" style="left:3184.3px;top:583.8px"></div><div class="z zn" style="left:3190.2px;top:618px;width:6px;background-color:#6aae6a"></div><div class="t lk" style="left:123px;top:651.26px;font-size:18px;color:#e8877f;transform:scaleX(0.9469);">0: dbNew</div><div style="left:1175px;top:650px;width:6px;height:20px;background:#8e8c2a;"></div><div class="tri" style="left:122px;top:688px"></div><div class="t th" style="left:152px;top:680.84px;font-size:25px;color:#fff;transform:scaleX(1.0607);">folk-worker-1</div><div style="left:122px;top:706px;width:3116px;height:2px;background:#46463f;"></div><div style="left:122px;top:735.2px;width:3116px;height:5px;background:#b02424;"></div><div style="left:166px;top:735.2px;width:140.6px;height:5px;background:#20e020;"></div><div style="left:631.6px;top:735.2px;width:141px;height:5px;background:#20e020;"></div><div style="left:1004.7px;top:735.2px;width:141.7px;height:5px;background:#20e020;"></div><div style="left:1377.7px;top:735.2px;width:141.1px;height:5px;background:#20e020;"></div><div style="left:1751px;top:735.2px;width:141.7px;height:5px;background:#20e020;"></div><div style="left:2124px;top:735.2px;width:141.8px;height:5px;background:#20e020;"></div><div style="left:2497px;top:735.2px;width:142px;height:5px;background:#20e020;"></div><div style="left:2962px;top:735.2px;width:141.6px;height:5px;background:#20e020;"></div><div class="dot" style="left:300.4px;top:715.8px"></div><div class="dot" style="left:766.4px;top:715.8px"></div><div class="dot" style="left:1140.2px;top:715.8px"></div><div class="dot" style="left:1512.6px;top:715.8px"></div><div class="dot" style="left:1886.5px;top:715.8px"></div><div class="dot" style="left:2259.6px;top:715.8px"></div><div class="dot" style="left:2632.8px;top:715.8px"></div><div class="dot" style="left:3097.4px;top:715.8px"></div><div class="z" style="left:122px;top:750px;width:3116px;background-color:#8ead64"><div class="zt" style="left:0px;transform:scaleX(0.9542)">RUN_WHEN</div></div><div class="z" style="left:122px;top:782px;width:3116px;background-color:#88a75f"><div class="zt" style="left:0px;transform:scaleX(1.0715)">virtual-programs/camera-usb.folk:329</div></div><div class="z" style="left:122px;top:814px;width:184.6px;background-color:#84a35c"><div class="zt" style="left:0px;transform:scaleX(1.0338)">camera-usb: 1761853509.94</div></div><div class="z" style="left:306.6px;top:814px;width:466px;background-color:#84a35c"><div class="zt" style="left:71.08px;transform:scaleX(1.0338)">camera-usb: 1761853509.96</div></div><div class="z" style="left:772.6px;top:814px;width:373.8px;background-color:#84a35c"><div class="zt" style="left:24.98px;transform:scaleX(1.0338)">camera-usb: 1761853509.98</div></div><div class="z" style="left:1146.4px;top:814px;width:372.4px;background-color:#84a35c"><div class="zt" style="left:24.28px;transform:scaleX(1.0338)">camera-usb: 1761853509.99</div></div><div class="z" style="left:1518.8px;top:814px;width:373.9px;background-color:#84a35c"><div class="zt" style="left:25.03px;transform:scaleX(1.0338)">camera-usb: 1761853510.01</div></div><div class="z" style="left:1892.7px;top:814px;width:373.1px;background-color:#84a35c"><div class="zt" style="left:24.63px;transform:scaleX(1.0338)">camera-usb: 1761853510.03</div></div><div class="z" style="left:2265.8px;top:814px;width:373.2px;background-color:#84a35c"><div class="zt" style="left:24.68px;transform:scaleX(1.0338)">camera-usb: 1761853510.04</div></div><div class="z" style="left:2639px;top:814px;width:464.6px;background-color:#84a35c"><div class="zt" style="left:70.38px;transform:scaleX(1.0338)">camera-usb: 1761853510.06</div></div><div class="z" style="left:3103.6px;top:814px;width:361.4px;background-color:#84a35c"><div class="zt" style="left:18.78px;transform:scaleX(1.0338)">camera-usb: 1761853510.08</div></div><div class="z zn" style="left:304.1px;top:846px;width:6px;background-color:#7e9c58"></div><div class="z zn" style="left:770.1px;top:846px;width:6px;background-color:#7e9c58"></div><div class="z zn" style="left:1143.9px;top:846px;width:6px;background-color:#7e9c58"></div><div class="z zn" style="left:1516.3px;top:846px;width:6px;background-color:#7e9c58"></div><div class="z zn" style="left:1890.2px;top:846px;width:6px;background-color:#7e9c58"></div><div class="z zn" style="left:2263.3px;top:846px;width:6px;background-color:#7e9c58"></div><div class="z zn" style="left:2636.5px;top:846px;width:6px;background-color:#7e9c58"></div><div class="z zn" style="left:3101.1px;top:846px;width:6px;background-color:#7e9c58"></div><div style="left:122px;top:750px;width:44px;height:128px;background:rgba(34,35,30,0.4);"></div><div style="left:306.6px;top:750px;width:325px;height:128px;background:rgba(34,35,30,0.4);"></div><div style="left:772.6px;top:750px;width:232.1px;height:128px;background:rgba(34,35,30,0.4);"></div><div style="left:1146.4px;top:750px;width:231.3px;height:128px;background:rgba(34,35,30,0.4);"></div><div style="left:1518.8px;top:750px;width:232.2px;height:128px;background:rgba(34,35,30,0.4);"></div><div style="left:1892.7px;top:750px;width:231.3px;height:128px;background:rgba(34,35,30,0.4);"></div><div style="left:2265.8px;top:750px;width:231.2px;height:128px;background:rgba(34,35,30,0.4);"></div><div style="left:2639px;top:750px;width:323px;height:128px;background:rgba(34,35,30,0.4);"></div><div style="left:3103.6px;top:750px;width:134.4px;height:128px;background:rgba(34,35,30,0.4);"></div><div class="tri" style="left:122px;top:894px"></div><div class="t th" style="left:152px;top:886.84px;font-size:25px;color:#fff;transform:scaleX(1.0607);">folk-worker-2</div><div style="left:122px;top:912px;width:3116px;height:2px;background:#46463f;"></div><div style="left:122px;top:941.2px;width:3116px;height:5px;background:#b02424;"></div><div style="left:154px;top:941.2px;width:6px;height:5px;background:#20e020;"></div><div style="left:256px;top:941.2px;width:6px;height:5px;background:#20e020;"></div><div style="left:490px;top:941.2px;width:6px;height:5px;background:#20e020;"></div><div style="left:523px;top:941.2px;width:7px;height:5px;background:#20e020;"></div><div style="left:609.5px;top:941.2px;width:42.5px;height:5px;background:#20e020;"></div><div style="left:888px;top:941.2px;width:6px;height:5px;background:#20e020;"></div><div style="left:1123px;top:941.2px;width:7px;height:5px;background:#20e020;"></div><div style="left:1227px;top:941.2px;width:6px;height:5px;background:#20e020;"></div><div style="left:1462px;top:941.2px;width:6px;height:5px;background:#20e020;"></div><div style="left:1495.5px;top:941.2px;width:6.5px;height:5px;background:#20e020;"></div><div style="left:1580px;top:941.2px;width:44px;height:5px;background:#20e020;"></div><div style="left:1859px;top:941.2px;width:7px;height:5px;background:#20e020;"></div><div style="left:2094.6px;top:941.2px;width:6.4px;height:5px;background:#20e020;"></div><div style="left:2198px;top:941.2px;width:7px;height:5px;background:#20e020;"></div><div style="left:2433.6px;top:941.2px;width:6.4px;height:5px;background:#20e020;"></div><div style="left:2465.7px;top:941.2px;width:6.3px;height:5px;background:#20e020;"></div><div style="left:2551px;top:941.2px;width:43px;height:5px;background:#20e020;"></div><div style="left:2829px;top:941.2px;width:6.5px;height:5px;background:#20e020;"></div><div style="left:3063.5px;top:941.2px;width:6.5px;height:5px;background:#20e020;"></div><div style="left:3169px;top:941.2px;width:7px;height:5px;background:#20e020;"></div><div class="dot" style="left:145.8px;top:921.8px"></div><div class="dot" style="left:247.6px;top:921.8px"></div><div class="dot" style="left:482.3px;top:921.8px"></div><div class="dot" style="left:515.8px;top:921.8px"></div><div class="dot" style="left:645.4px;top:921.8px"></div><div class="dot" style="left:880.1px;top:921.8px"></div><div class="dot" style="left:1114.8px;top:921.8px"></div><div class="dot" style="left:1218.8px;top:921.8px"></div><div class="dot" style="left:1453.8px;top:921.8px"></div><div class="dot" style="left:1487.4px;top:921.8px"></div><div class="dot" style="left:1616.8px;top:921.8px"></div><div class="dot" style="left:1851.8px;top:921.8px"></div><div class="dot" style="left:2086.4px;top:921.8px"></div><div class="dot" style="left:2190.8px;top:921.8px"></div><div class="dot" style="left:2425.4px;top:921.8px"></div><div class="dot" style="left:2458.2px;top:921.8px"></div><div class="dot" style="left:2586.6px;top:921.8px"></div><div class="dot" style="left:2821.3px;top:921.8px"></div><div class="dot" style="left:3055.8px;top:921.8px"></div><div class="dot" style="left:3161.6px;top:921.8px"></div><div class="z" style="left:122px;top:956px;width:3116px;background-color:#aaa561"><div class="zt" style="left:0px;transform:scaleX(0.9542)">RUN_WHEN</div></div><div class="z" style="left:122px;top:988px;width:3116px;background-color:#a29d5c"><div class="zt" style="left:0px;transform:scaleX(0.9936)">:1</div></div><div class="z" style="left:122px;top:1020px;width:487.5px;background-color:#a6a15e"><div class="zt" style="left:0px;transform:scaleX(1.0172)">vkWaitForFences(wi-&gt;inFlightFence)</div></div><div class="z" style="left:609.5px;top:1020px;width:14px;background-color:#a6a15e"><div class="zt" style="left:1.5px;transform:scaleX(1.1014)">g</div></div><div class="z" style="left:623.5px;top:1020px;width:28.5px;background-color:#a6a15e"></div><div class="z" style="left:652px;top:1020px;width:929px;background-color:#a6a15e"><div class="zt" style="left:261.75px;transform:scaleX(1.0172)">vkWaitForFences(wi-&gt;inFlightFence)</div></div><div class="z" style="left:1581px;top:1020px;width:14px;background-color:#a6a15e"><div class="zt" style="left:1.5px;transform:scaleX(1.1014)">g</div></div><div class="z" style="left:1595px;top:1020px;width:29px;background-color:#a6a15e"></div><div class="z" style="left:1624px;top:1020px;width:927px;background-color:#a6a15e"><div class="zt" style="left:260.75px;transform:scaleX(1.0172)">vkWaitForFences(wi-&gt;inFlightFence)</div></div><div class="z" style="left:2551px;top:1020px;width:14px;background-color:#a6a15e"><div class="zt" style="left:1.5px;transform:scaleX(1.1014)">g</div></div><div class="z" style="left:2565px;top:1020px;width:29px;background-color:#a6a15e"></div><div class="z" style="left:2594px;top:1020px;width:926px;background-color:#a6a15e"><div class="zt" style="left:260.25px;transform:scaleX(1.0172)">vkWaitForFences(wi-&gt;inFlightFence)</div></div><div class="z zn" style="left:614px;top:1052px;width:6px;background-color:#9e9a5a"></div><div class="z zn" style="left:1584px;top:1052px;width:6px;background-color:#9e9a5a"></div><div class="z zn" style="left:2556px;top:1052px;width:6px;background-color:#9e9a5a"></div><div style="left:122px;top:956px;width:32px;height:128px;background:rgba(34,35,30,0.4);"></div><div style="left:160px;top:956px;width:96px;height:128px;background:rgba(34,35,30,0.4);"></div><div style="left:262px;top:956px;width:228px;height:128px;background:rgba(34,35,30,0.4);"></div><div style="left:496px;top:956px;width:27px;height:128px;background:rgba(34,35,30,0.4);"></div><div style="left:530px;top:956px;width:79.5px;height:128px;background:rgba(34,35,30,0.4);"></div><div style="left:652px;top:956px;width:236px;height:128px;background:rgba(34,35,30,0.4);"></div><div style="left:894px;top:956px;width:229px;height:128px;background:rgba(34,35,30,0.4);"></div><div style="left:1130px;top:956px;width:97px;height:128px;background:rgba(34,35,30,0.4);"></div><div style="left:1233px;top:956px;width:229px;height:128px;background:rgba(34,35,30,0.4);"></div><div style="left:1468px;top:956px;width:27.5px;height:128px;background:rgba(34,35,30,0.4);"></div><div style="left:1502px;top:956px;width:78px;height:128px;background:rgba(34,35,30,0.4);"></div><div style="left:1624px;top:956px;width:235px;height:128px;background:rgba(34,35,30,0.4);"></div><div style="left:1866px;top:956px;width:228.6px;height:128px;background:rgba(34,35,30,0.4);"></div><div style="left:2101px;top:956px;width:97px;height:128px;background:rgba(34,35,30,0.4);"></div><div style="left:2205px;top:956px;width:228.6px;height:128px;background:rgba(34,35,30,0.4);"></div><div style="left:2440px;top:956px;width:25.7px;height:128px;background:rgba(34,35,30,0.4);"></div><div style="left:2472px;top:956px;width:79px;height:128px;background:rgba(34,35,30,0.4);"></div><div style="left:2594px;top:956px;width:235px;height:128px;background:rgba(34,35,30,0.4);"></div><div style="left:2835.5px;top:956px;width:228px;height:128px;background:rgba(34,35,30,0.4);"></div><div style="left:3070px;top:956px;width:99px;height:128px;background:rgba(34,35,30,0.4);"></div><div style="left:3176px;top:956px;width:62px;height:128px;background:rgba(34,35,30,0.4);"></div><div class="tri" style="left:122px;top:1100px"></div><div class="t th" style="left:152px;top:1092.84px;font-size:25px;color:#fff;transform:scaleX(1.0695);">folk-worker-11</div><div style="left:122px;top:1118px;width:3116px;height:2px;background:#46463f;"></div><div style="left:122px;top:1147.2px;width:3116px;height:5px;background:#20e020;"></div><div class="dot" style="left:150.8px;top:1127.8px"></div><div class="dot" style="left:627.4px;top:1127.8px"></div><div class="dot" style="left:782.5px;top:1127.8px"></div><div class="dot" style="left:955.7px;top:1127.8px"></div><div class="dot" style="left:1540.8px;top:1127.8px"></div><div class="dot" style="left:1714.8px;top:1127.8px"></div><div class="dot" style="left:1736.8px;top:1127.8px"></div><div class="dot" style="left:2488.3px;top:1127.8px"></div><div class="dot" style="left:2646.8px;top:1127.8px"></div><div class="dot" style="left:3002.5px;top:1127.8px"></div><div class="dot" style="left:3041.8px;top:1127.8px"></div><div class="dot" style="left:3065.8px;top:1127.8px"></div><div class="dot" style="left:3112.8px;top:1127.8px"></div><div class="z zn" style="left:128.5px;top:1162px;width:6px;background-color:#785faa"></div><div class="z zn" style="left:156px;top:1162px;width:6px;background-color:#785faa"></div><div class="z zn" style="left:277.5px;top:1162px;width:6px;background-color:#785faa"></div><div class="z" style="left:321px;top:1162px;width:16px;background-color:#785faa"><div class="zt" style="left:1px;transform:scaleX(0.8578)">R</div></div><div class="z zn" style="left:343px;top:1162px;width:6px;background-color:#785faa"></div><div class="z zn" style="left:357px;top:1162px;width:6px;background-color:#785faa"></div><div class="z zn" style="left:502px;top:1162px;width:6px;background-color:#785faa"></div><div class="z zn" style="left:535.6px;top:1162px;width:6px;background-color:#785faa"></div><div class="z zn" style="left:725.5px;top:1162px;width:6px;background-color:#785faa"></div><div class="z" style="left:789px;top:1162px;width:16.4px;background-color:#785faa"><div class="zt" style="left:1px;transform:scaleX(0.8578)">R</div></div><div class="z" style="left:811px;top:1162px;width:22.5px;background-color:#785faa"><div class="zt" style="left:3.66px;transform:scaleX(0.8578)">R</div></div><div class="z zn" style="left:873px;top:1162px;width:6px;background-color:#785faa"></div><div class="z zn" style="left:951.5px;top:1162px;width:6px;background-color:#785faa"></div><div class="z" style="left:1145px;top:1162px;width:231px;background-color:#785faa"><div class="zt" style="left:47.96px;transform:scaleX(0.9542)">RUN_WHEN</div></div><div class="z zn" style="left:1378px;top:1162px;width:6px;background-color:#785faa"></div><div class="z zn" style="left:1399.5px;top:1162px;width:6px;background-color:#785faa"></div><div class="z" style="left:1534px;top:1162px;width:16px;background-color:#785faa"><div class="zt" style="left:1px;transform:scaleX(0.8578)">R</div></div><div class="z zn" style="left:1556.6px;top:1162px;width:6px;background-color:#785faa"></div><div class="z zn" style="left:1569.7px;top:1162px;width:9.3px;background-color:#785faa"><div class="zt" style="left:1px;transform:scaleX(0.8578)">R</div></div><div class="z zn" style="left:1621.5px;top:1162px;width:6px;background-color:#785faa"></div><div class="z zn" style="left:1700px;top:1162px;width:6px;background-color:#785faa"></div><div class="z zn" style="left:1746px;top:1162px;width:6px;background-color:#785faa"></div><div class="z zn" style="left:1847.6px;top:1162px;width:6px;background-color:#785faa"></div><div class="z zn" style="left:1890px;top:1162px;width:6px;background-color:#785faa"></div><div class="z zn" style="left:1908px;top:1162px;width:6px;background-color:#785faa"></div><div class="z zn" style="left:1923px;top:1162px;width:8px;background-color:#785faa"><div class="zt" style="left:1px;transform:scaleX(0.8578)">R</div></div><div class="z" style="left:1931px;top:1162px;width:22px;background-color:#785faa"><div class="zt" style="left:3.92px;transform:scaleX(1.0387);color:#f0903c">5</div></div><div class="z zn" style="left:2071px;top:1162px;width:6px;background-color:#785faa"></div><div class="z zn" style="left:2111px;top:1162px;width:6px;background-color:#785faa"></div><div class="z" style="left:2279px;top:1162px;width:11px;background-color:#785faa"></div><div class="z zn" style="left:2295px;top:1162px;width:7px;background-color:#785faa"></div><div class="z" style="left:2302px;top:1162px;width:12px;background-color:#785faa"><div class="zt" style="left:1px;transform:scaleX(0.8578)">R</div></div><div class="z zn" style="left:2314px;top:1162px;width:6px;background-color:#785faa"></div><div class="z zn" style="left:2367px;top:1162px;width:6px;background-color:#785faa"></div><div class="z zn" style="left:2493px;top:1162px;width:6px;background-color:#785faa"></div><div class="z zn" style="left:2520px;top:1162px;width:6px;background-color:#785faa"></div><div class="z zn" style="left:2636.6px;top:1162px;width:6px;background-color:#785faa"></div><div class="z" style="left:2653px;top:1162px;width:10px;background-color:#785faa"><div class="zt" style="left:1px;transform:scaleX(0.8446)">F</div></div><div class="z" style="left:2663px;top:1162px;width:10px;background-color:#785faa"><div class="zt" style="left:1px;transform:scaleX(0.8446)">F</div></div><div class="z" style="left:2673px;top:1162px;width:10px;background-color:#785faa"><div class="zt" style="left:1px;transform:scaleX(0.8446)">F</div></div><div class="z zn" style="left:2689px;top:1162px;width:6px;background-color:#785faa"></div><div class="z zn" style="left:2741.5px;top:1162px;width:6px;background-color:#785faa"></div><div class="z zn" style="left:2820px;top:1162px;width:6px;background-color:#785faa"></div><div class="z zn" style="left:2858.5px;top:1162px;width:6px;background-color:#785faa"></div><div class="z" style="left:3117.6px;top:1162px;width:13.4px;background-color:#785faa"><div class="zt" style="left:1px;transform:scaleX(0.8446)">F</div></div><div class="z" style="left:3133px;top:1162px;width:13px;background-color:#785faa"><div class="zt" style="left:1px;transform:scaleX(0.8446)">F</div></div><div class="z" style="left:3146px;top:1162px;width:13.8px;background-color:#785faa"><div class="zt" style="left:1px;transform:scaleX(0.8446)">F</div></div><div class="z zn" style="left:3192px;top:1162px;width:6px;background-color:#785faa"></div><div class="z zn" style="left:330px;top:1194px;width:8px;background-color:#745ca4"><div class="zt" style="left:1px;transform:scaleX(1.0387)">6</div></div><div class="z zn" style="left:797px;top:1194px;width:8px;background-color:#745ca4"><div class="zt" style="left:1px;transform:scaleX(1.0387)">6</div></div><div class="z" style="left:817px;top:1194px;width:10.5px;background-color:#745ca4"><div class="zt" style="left:1px;transform:scaleX(1.0387)">1</div></div><div class="z" style="left:1145px;top:1194px;width:231px;background-color:#745ca4"><div class="zt" style="left:101.35px;transform:scaleX(1.0387)">70</div></div><div class="z zn" style="left:1542px;top:1194px;width:8px;background-color:#745ca4"><div class="zt" style="left:1px;transform:scaleX(1.0387)">6</div></div><div class="z zn" style="left:1574px;top:1194px;width:7px;background-color:#745ca4"><div class="zt" style="left:1px;transform:scaleX(1.0387)">9</div></div><div class="z zn" style="left:1924px;top:1194px;width:7px;background-color:#745ca4"><div class="zt" style="left:1px;transform:scaleX(1.0387)">7</div></div><div class="z" style="left:2302px;top:1194px;width:12px;background-color:#745ca4"><div class="zt" style="left:1px;transform:scaleX(1.0387)">1</div></div><div class="z" style="left:2660px;top:1194px;width:11px;background-color:#745ca4"><div class="zt" style="left:1px;transform:scaleX(1.0387)">6</div></div><div class="z" style="left:2671px;top:1194px;width:12px;background-color:#745ca4"><div class="zt" style="left:1px;transform:scaleX(1.0387)">7</div></div><div class="z" style="left:3125.7px;top:1194px;width:14.3px;background-color:#745ca4"><div class="zt" style="left:1px;transform:scaleX(1.0387)">6</div></div><div class="z" style="left:3142px;top:1194px;width:11px;background-color:#745ca4"><div class="zt" style="left:1px;transform:scaleX(1.0387)">7</div></div><div class="z zn" style="left:332px;top:1226px;width:6px;background-color:#6f589d"></div><div class="z zn" style="left:798.7px;top:1226px;width:6.3px;background-color:#6f589d"></div><div class="z zn" style="left:824px;top:1226px;width:5.5px;background-color:#6f589d"></div><div class="z" style="left:1146px;top:1226px;width:230px;background-color:#6f589d"><div class="zt" style="left:27.01px;transform:scaleX(1.0333)">1761853509.98</div></div><div class="z zn" style="left:1544px;top:1226px;width:6px;background-color:#6f589d"></div><div class="z zn" style="left:1583px;top:1226px;width:5px;background-color:#6f589d"></div><div class="z zn" style="left:1930px;top:1226px;width:6px;background-color:#6f589d"></div><div class="z zn" style="left:2311px;top:1226px;width:5px;background-color:#6f589d"></div><div class="z zn" style="left:2663px;top:1226px;width:7px;background-color:#6f589d"></div><div class="z zn" style="left:2673px;top:1226px;width:7px;background-color:#6f589d"></div><div class="z zn" style="left:3129px;top:1226px;width:5px;background-color:#6f589d"></div><div class="z zn" style="left:3146px;top:1226px;width:6px;background-color:#6f589d"></div><div class="z zn" style="left:1377px;top:1258px;width:5px;background-color:#6a5596"></div><div class="t lk" style="left:123px;top:1291.26px;font-size:18px;color:#e8877f;transform:scaleX(0.9469);">0: dbNew</div><div style="left:321.6px;top:1290px;width:6px;height:20px;background:#8e8c2a;"></div><div style="left:874.6px;top:1290px;width:6px;height:20px;background:#8e8c2a;"></div><div style="left:1561px;top:1290px;width:6px;height:20px;background:#8e8c2a;"></div><div style="left:1908px;top:1290px;width:6px;height:20px;background:#8e8c2a;"></div><div style="left:2743.5px;top:1290px;width:6px;height:20px;background:#8e8c2a;"></div><div style="left:155px;top:1290px;width:6px;height:20px;background:#c02828;"></div><div style="left:789px;top:1290px;width:6px;height:20px;background:#c02828;"></div><div style="left:1546.6px;top:1290px;width:6px;height:20px;background:#c02828;"></div><div style="left:2280px;top:1290px;width:6px;height:20px;background:#c02828;"></div><div style="left:2495px;top:1290px;width:6px;height:20px;background:#c02828;"></div><div style="left:2652px;top:1290px;width:6px;height:20px;background:#c02828;"></div><div style="left:3119px;top:1290px;width:6px;height:20px;background:#c02828;"></div><div class="tri" style="left:122px;top:1328px"></div><div class="t th" style="left:152px;top:1320.84px;font-size:25px;color:#fff;transform:scaleX(1.0570);">folk-worker-16</div><div style="left:122px;top:1346px;width:3116px;height:2px;background:#46463f;"></div><div style="left:122px;top:1375.2px;width:3116px;height:5px;background:#20e020;"></div><div class="dot" style="left:316.4px;top:1355.8px"></div><div class="dot" style="left:419.8px;top:1355.8px"></div><div class="dot" style="left:528.8px;top:1355.8px"></div><div class="dot" style="left:868.8px;top:1355.8px"></div><div class="dot" style="left:985.8px;top:1355.8px"></div><div class="dot" style="left:1168.8px;top:1355.8px"></div><div class="dot" style="left:1901.8px;top:1355.8px"></div><div class="dot" style="left:1914.6px;top:1355.8px"></div><div class="dot" style="left:1988.8px;top:1355.8px"></div><div class="dot" style="left:2286.8px;top:1355.8px"></div><div class="dot" style="left:2851.8px;top:1355.8px"></div><div class="dot" style="left:3134.8px;top:1355.8px"></div><div class="z zn" style="left:155.8px;top:1390px;width:6px;background-color:#62aaa8"></div><div class="z zn" style="left:277.5px;top:1390px;width:6px;background-color:#62aaa8"></div><div class="z zn" style="left:305.6px;top:1390px;width:6px;background-color:#62aaa8"></div><div class="z" style="left:321px;top:1390px;width:16px;background-color:#62aaa8"><div class="zt" style="left:1px;transform:scaleX(0.8578)">R</div></div><div class="z" style="left:339px;top:1390px;width:13px;background-color:#62aaa8"></div><div class="z" style="left:356px;top:1390px;width:13px;background-color:#62aaa8"></div><div class="z zn" style="left:424.6px;top:1390px;width:6px;background-color:#62aaa8"></div><div class="z zn" style="left:502px;top:1390px;width:6px;background-color:#62aaa8"></div><div class="z zn" style="left:533.6px;top:1390px;width:6px;background-color:#62aaa8"></div><div class="z" style="left:770.6px;top:1390px;width:16.8px;background-color:#62aaa8"><div class="zt" style="left:1px;transform:scaleX(0.8578)">R</div></div><div class="z" style="left:789px;top:1390px;width:12px;background-color:#62aaa8"></div><div class="z" style="left:804px;top:1390px;width:11.4px;background-color:#62aaa8"></div><div class="z" style="left:823.5px;top:1390px;width:13.5px;background-color:#62aaa8"></div><div class="z zn" style="left:873px;top:1390px;width:6px;background-color:#62aaa8"></div><div class="z zn" style="left:953.5px;top:1390px;width:6px;background-color:#62aaa8"></div><div class="z zn" style="left:990px;top:1390px;width:6px;background-color:#62aaa8"></div><div class="z" style="left:1159.8px;top:1390px;width:16.7px;background-color:#62aaa8"><div class="zt" style="left:1px;transform:scaleX(0.8578)">R</div></div><div class="z" style="left:1178.5px;top:1390px;width:12.5px;background-color:#62aaa8"></div><div class="z" style="left:1194.5px;top:1390px;width:12.1px;background-color:#62aaa8"></div><div class="z zn" style="left:1247px;top:1390px;width:6px;background-color:#62aaa8"></div><div class="z zn" style="left:1375px;top:1390px;width:6px;background-color:#62aaa8"></div><div class="z zn" style="left:1401.5px;top:1390px;width:6px;background-color:#62aaa8"></div><div class="z zn" style="left:1474px;top:1390px;width:6px;background-color:#62aaa8"></div><div class="z" style="left:1517.5px;top:1390px;width:226.8px;background-color:#62aaa8"><div class="zt" style="left:45.86px;transform:scaleX(0.9542)">RUN_WHEN</div></div><div class="z zn" style="left:1909px;top:1390px;width:7px;background-color:#62aaa8"></div><div class="z zn" style="left:1916px;top:1390px;width:9.5px;background-color:#62aaa8"><div class="zt" style="left:1px;transform:scaleX(0.8578)">R</div></div><div class="z" style="left:1929.5px;top:1390px;width:18.5px;background-color:#62aaa8"><div class="zt" style="left:1.66px;transform:scaleX(0.8578)">R</div></div><div class="z zn" style="left:1993px;top:1390px;width:6px;background-color:#62aaa8"></div><div class="z zn" style="left:2071.6px;top:1390px;width:6px;background-color:#62aaa8"></div><div class="z zn" style="left:2113px;top:1390px;width:6px;background-color:#62aaa8"></div><div class="z zn" style="left:2146.5px;top:1390px;width:6px;background-color:#62aaa8"></div><div class="z zn" style="left:2220.7px;top:1390px;width:6px;background-color:#62aaa8"></div><div class="z zn" style="left:2263.5px;top:1390px;width:6px;background-color:#62aaa8"></div><div class="z zn" style="left:2278.8px;top:1390px;width:9.2px;background-color:#62aaa8"></div><div class="z zn" style="left:2288px;top:1390px;width:6.4px;background-color:#62aaa8"><div class="zt" style="left:1px;transform:scaleX(0.8578)">R</div></div><div class="z zn" style="left:2294.4px;top:1390px;width:8.6px;background-color:#62aaa8"><div class="zt" style="left:1px;transform:scaleX(0.8578)">R</div></div><div class="z" style="left:2303px;top:1390px;width:17px;background-color:#62aaa8"><div class="zt" style="left:1.42px;transform:scaleX(1.0387);color:#f0903c">4</div></div><div class="z zn" style="left:2368px;top:1390px;width:6px;background-color:#62aaa8"></div><div class="z zn" style="left:2493px;top:1390px;width:6px;background-color:#62aaa8"></div><div class="z zn" style="left:2521px;top:1390px;width:6px;background-color:#62aaa8"></div><div class="z zn" style="left:2594.4px;top:1390px;width:6px;background-color:#62aaa8"></div><div class="z" style="left:2636px;top:1390px;width:17px;background-color:#62aaa8"><div class="zt" style="left:1px;transform:scaleX(0.8578)">R</div></div><div class="z zn" style="left:2656px;top:1390px;width:5px;background-color:#62aaa8"></div><div class="z" style="left:2669px;top:1390px;width:29px;background-color:#62aaa8"><div class="zt" style="left:6.91px;transform:scaleX(0.8578)">R</div></div><div class="z zn" style="left:2745.6px;top:1390px;width:6px;background-color:#62aaa8"></div><div class="z zn" style="left:2856.6px;top:1390px;width:6px;background-color:#62aaa8"></div><div class="z zn" style="left:2968px;top:1390px;width:6px;background-color:#62aaa8"></div><div class="z zn" style="left:3101px;top:1390px;width:6px;background-color:#62aaa8"></div><div class="z" style="left:3117.6px;top:1390px;width:20.1px;background-color:#62aaa8"><div class="zt" style="left:2.46px;transform:scaleX(0.8578)">R</div></div><div class="z" style="left:3141px;top:1390px;width:18px;background-color:#62aaa8"><div class="zt" style="left:1.41px;transform:scaleX(0.8578)">R</div></div><div class="z zn" style="left:3191.6px;top:1390px;width:6px;background-color:#62aaa8"></div><div class="z zn" style="left:328.7px;top:1422px;width:8.7px;background-color:#5ea2a0"><div class="zt" style="left:1px;transform:scaleX(1.0387)">6</div></div><div class="z" style="left:770.6px;top:1422px;width:16.4px;background-color:#5ea2a0"><div class="zt" style="left:1.12px;transform:scaleX(1.0387)">8</div></div><div class="z" style="left:1167.8px;top:1422px;width:10px;background-color:#5ea2a0"><div class="zt" style="left:1px;transform:scaleX(1.0387)">6</div></div><div class="z" style="left:1517.5px;top:1422px;width:226.8px;background-color:#5ea2a0"><div class="zt" style="left:99.25px;transform:scaleX(1.0387)">70</div></div><div class="z" style="left:1915.5px;top:1422px;width:10px;background-color:#5ea2a0"><div class="zt" style="left:1px;transform:scaleX(1.0387)">6</div></div><div class="z" style="left:1931px;top:1422px;width:11px;background-color:#5ea2a0"><div class="zt" style="left:1px;transform:scaleX(1.0387)">1</div></div><div class="z zn" style="left:2288px;top:1422px;width:6.4px;background-color:#5ea2a0"><div class="zt" style="left:1px;transform:scaleX(1.0387)">6</div></div><div class="z zn" style="left:2294.4px;top:1422px;width:9.6px;background-color:#5ea2a0"><div class="zt" style="left:1px;transform:scaleX(1.0387)">7</div></div><div class="z" style="left:2637.6px;top:1422px;width:14px;background-color:#5ea2a0"><div class="zt" style="left:1px;transform:scaleX(1.0387)">8</div></div><div class="z" style="left:2681px;top:1422px;width:10.7px;background-color:#5ea2a0"><div class="zt" style="left:1px;transform:scaleX(1.0387)">1</div></div><div class="z" style="left:3127.7px;top:1422px;width:10px;background-color:#5ea2a0"><div class="zt" style="left:1px;transform:scaleX(1.0387)">6</div></div><div class="z" style="left:3142px;top:1422px;width:12px;background-color:#5ea2a0"><div class="zt" style="left:1px;transform:scaleX(1.0387)">1</div></div><div class="z zn" style="left:330.7px;top:1454px;width:6px;background-color:#5a9b99"></div><div class="z" style="left:772px;top:1454px;width:15.4px;background-color:#5a9b99"><div class="zt" style="left:1px;transform:scaleX(1.0387)">1</div></div><div class="z zn" style="left:1169.8px;top:1454px;width:8px;background-color:#5a9b99"></div><div class="z" style="left:1517.5px;top:1454px;width:226.8px;background-color:#5a9b99"><div class="zt" style="left:25.41px;transform:scaleX(1.0333)">1761853509.99</div></div><div class="z zn" style="left:1917.5px;top:1454px;width:6.5px;background-color:#5a9b99"></div><div class="z zn" style="left:1939px;top:1454px;width:5px;background-color:#5a9b99"></div><div class="z zn" style="left:2290px;top:1454px;width:7px;background-color:#5a9b99"></div><div class="z zn" style="left:2303px;top:1454px;width:6px;background-color:#5a9b99"></div><div class="z" style="left:2639px;top:1454px;width:12.6px;background-color:#5a9b99"><div class="zt" style="left:1px;transform:scaleX(1.0387)">1</div></div><div class="z zn" style="left:2687.7px;top:1454px;width:5.3px;background-color:#5a9b99"></div><div class="z zn" style="left:3129px;top:1454px;width:6.7px;background-color:#5a9b99"></div><div class="z zn" style="left:3149.7px;top:1454px;width:5.3px;background-color:#5a9b99"></div><div class="z zn" style="left:774px;top:1486px;width:5.3px;background-color:#569492"></div><div class="z zn" style="left:786.7px;top:1486px;width:6px;background-color:#569492"></div><div class="z zn" style="left:1744.3px;top:1486px;width:5.3px;background-color:#569492"></div><div class="z zn" style="left:2639.6px;top:1486px;width:5.4px;background-color:#569492"></div><div class="z zn" style="left:2651.6px;top:1486px;width:4.4px;background-color:#569492"></div><div class="t lk" style="left:123px;top:1519.26px;font-size:18px;color:#e8877f;transform:scaleX(0.9469);">0: dbNew</div><div style="left:156px;top:1518px;width:6px;height:20px;background:#8e8c2a;"></div><div style="left:1160px;top:1518px;width:6px;height:20px;background:#8e8c2a;"></div><div style="left:1377.5px;top:1518px;width:6px;height:20px;background:#8e8c2a;"></div><div style="left:2281px;top:1518px;width:6px;height:20px;background:#8e8c2a;"></div><div style="left:2495px;top:1518px;width:6px;height:20px;background:#8e8c2a;"></div><div style="left:3119px;top:1518px;width:6px;height:20px;background:#8e8c2a;"></div><div style="left:321.7px;top:1518px;width:6px;height:20px;background:#c02828;"></div><div style="left:425.3px;top:1518px;width:6px;height:20px;background:#c02828;"></div><div style="left:535.6px;top:1518px;width:6px;height:20px;background:#c02828;"></div><div style="left:874.6px;top:1518px;width:6px;height:20px;background:#c02828;"></div><div style="left:993px;top:1518px;width:6px;height:20px;background:#c02828;"></div><div style="left:1175.5px;top:1518px;width:6px;height:20px;background:#c02828;"></div><div style="left:1908px;top:1518px;width:6px;height:20px;background:#c02828;"></div><div style="left:1921px;top:1518px;width:6px;height:20px;background:#c02828;"></div><div style="left:1995px;top:1518px;width:6px;height:20px;background:#c02828;"></div><div style="left:2293px;top:1518px;width:6px;height:20px;background:#c02828;"></div><div style="left:2857px;top:1518px;width:6px;height:20px;background:#c02828;"></div><div class="tri" style="left:122px;top:1556px"></div><div class="t th" style="left:152px;top:1548.84px;font-size:25px;color:#fff;transform:scaleX(1.0570);">folk-worker-17</div><div style="left:122px;top:1574px;width:3116px;height:2px;background:#46463f;"></div><div style="left:122px;top:1603.2px;width:3116px;height:5px;background:#20e020;"></div><div class="dot" style="left:1154.8px;top:1583.8px"></div><div class="dot" style="left:1555.8px;top:1583.8px"></div><div class="z" style="left:122px;top:1618px;width:33.5px;background-color:#aaac62"><div class="zt" style="left:0px;transform:scaleX(0.9329)">RU</div></div><div class="z zn" style="left:202.6px;top:1618px;width:6px;background-color:#aaac62"></div><div class="z zn" style="left:279px;top:1618px;width:6px;background-color:#aaac62"></div><div class="z" style="left:305px;top:1618px;width:229.6px;background-color:#aaac62"><div class="zt" style="left:47.26px;transform:scaleX(0.9542)">RUN_WHEN</div></div><div class="z zn" style="left:577px;top:1618px;width:6px;background-color:#aaac62"></div><div class="z zn" style="left:727px;top:1618px;width:6px;background-color:#aaac62"></div><div class="z zn" style="left:771.6px;top:1618px;width:6px;background-color:#aaac62"></div><div class="z" style="left:787px;top:1618px;width:15px;background-color:#aaac62"><div class="zt" style="left:1px;transform:scaleX(0.8578)">R</div></div><div class="z" style="left:802px;top:1618px;width:15.4px;background-color:#aaac62"></div><div class="z zn" style="left:826px;top:1618px;width:6px;background-color:#aaac62"></div><div class="z zn" style="left:951.5px;top:1618px;width:6px;background-color:#aaac62"></div><div class="z zn" style="left:991px;top:1618px;width:6px;background-color:#aaac62"></div><div class="z zn" style="left:1144.7px;top:1618px;width:6px;background-color:#aaac62"></div><div class="z" style="left:1161px;top:1618px;width:13px;background-color:#aaac62"><div class="zt" style="left:1px;transform:scaleX(0.8578)">R</div></div><div class="z" style="left:1174px;top:1618px;width:14px;background-color:#aaac62"></div><div class="z zn" style="left:1197px;top:1618px;width:6px;background-color:#aaac62"></div><div class="z zn" style="left:1399.5px;top:1618px;width:6px;background-color:#aaac62"></div><div class="z" style="left:1517.5px;top:1618px;width:13.5px;background-color:#aaac62"><div class="zt" style="left:1px;transform:scaleX(0.8578)">R</div></div><div class="z zn" style="left:1534px;top:1618px;width:7px;background-color:#aaac62"></div><div class="z" style="left:1549.6px;top:1618px;width:14.7px;background-color:#aaac62"></div><div class="z zn" style="left:1570.7px;top:1618px;width:6px;background-color:#aaac62"></div><div class="z zn" style="left:1625px;top:1618px;width:6px;background-color:#aaac62"></div><div class="z zn" style="left:1745px;top:1618px;width:6px;background-color:#aaac62"></div><div class="z zn" style="left:1847.6px;top:1618px;width:6px;background-color:#aaac62"></div><div class="z" style="left:1890.7px;top:1618px;width:15.3px;background-color:#aaac62"><div class="zt" style="left:1px;transform:scaleX(0.8578)">R</div></div><div class="z" style="left:1908.8px;top:1618px;width:14.2px;background-color:#aaac62"><div class="zt" style="left:1px;transform:scaleX(0.8578)">R</div></div><div class="z" style="left:1923px;top:1618px;width:25px;background-color:#aaac62"><div class="zt" style="left:5.42px;transform:scaleX(1.0387);color:#f0903c">8</div></div><div class="z zn" style="left:1993px;top:1618px;width:6px;background-color:#aaac62"></div><div class="z zn" style="left:2071.6px;top:1618px;width:6px;background-color:#aaac62"></div><div class="z zn" style="left:2111px;top:1618px;width:6px;background-color:#aaac62"></div><div class="z" style="left:2264px;top:1618px;width:228.5px;background-color:#aaac62"><div class="zt" style="left:46.71px;transform:scaleX(0.9542)">RUN_WHEN</div></div><div class="z zn" style="left:2520px;top:1618px;width:6px;background-color:#aaac62"></div><div class="z" style="left:2636px;top:1618px;width:221px;background-color:#aaac62"><div class="zt" style="left:42.96px;transform:scaleX(0.9542)">RUN_WHEN</div></div><div class="z zn" style="left:2969.6px;top:1618px;width:6px;background-color:#aaac62"></div><div class="z zn" style="left:3043.7px;top:1618px;width:6px;background-color:#aaac62"></div><div class="z" style="left:3102px;top:1618px;width:15.6px;background-color:#aaac62"><div class="zt" style="left:1px;transform:scaleX(0.8578)">R</div></div><div class="z zn" style="left:3121px;top:1618px;width:6.7px;background-color:#aaac62"></div><div class="z" style="left:3134.4px;top:1618px;width:30.1px;background-color:#aaac62"><div class="zt" style="left:7.97px;transform:scaleX(1.0387);color:#f0903c">9</div></div><div class="z zn" style="left:3192px;top:1618px;width:6px;background-color:#aaac62"></div><div class="z" style="left:122px;top:1650px;width:33.5px;background-color:#a2a45c"><div class="zt" style="left:0px;transform:scaleX(1.0387)">70</div></div><div class="z" style="left:305px;top:1650px;width:229.6px;background-color:#a2a45c"><div class="zt" style="left:100.65px;transform:scaleX(1.0387)">70</div></div><div class="z" style="left:795px;top:1650px;width:10.4px;background-color:#a2a45c"><div class="zt" style="left:1px;transform:scaleX(1.0387)">6</div></div><div class="z zn" style="left:1167.8px;top:1650px;width:8.7px;background-color:#a2a45c"><div class="zt" style="left:1px;transform:scaleX(1.0387)">6</div></div><div class="z" style="left:1517.5px;top:1650px;width:13.5px;background-color:#a2a45c"><div class="zt" style="left:1px;transform:scaleX(1.0387)">8</div></div><div class="z" style="left:1890.7px;top:1650px;width:15.3px;background-color:#a2a45c"><div class="zt" style="left:1px;transform:scaleX(1.0387)">8</div></div><div class="z zn" style="left:1915.5px;top:1650px;width:8.5px;background-color:#a2a45c"><div class="zt" style="left:1px;transform:scaleX(1.0387)">6</div></div><div class="z" style="left:2264px;top:1650px;width:228.5px;background-color:#a2a45c"><div class="zt" style="left:100.1px;transform:scaleX(1.0387)">70</div></div><div class="z" style="left:2636px;top:1650px;width:221px;background-color:#a2a45c"><div class="zt" style="left:96.35px;transform:scaleX(1.0387)">70</div></div><div class="z" style="left:3102px;top:1650px;width:15.6px;background-color:#a2a45c"><div class="zt" style="left:1px;transform:scaleX(1.0387)">8</div></div><div class="z" style="left:123px;top:1682px;width:32.5px;background-color:#9c9e58"><div class="zt" style="left:3px;transform:scaleX(1.0387)">17</div></div><div class="z" style="left:305px;top:1682px;width:229.6px;background-color:#9c9e58"><div class="zt" style="left:26.81px;transform:scaleX(1.0333)">1761853509.94</div></div><div class="z zn" style="left:798.7px;top:1682px;width:4.7px;background-color:#9c9e58"></div><div class="z zn" style="left:1169.8px;top:1682px;width:5.2px;background-color:#9c9e58"></div><div class="z" style="left:1519px;top:1682px;width:15px;background-color:#9c9e58"><div class="zt" style="left:1px;transform:scaleX(1.0387)">1</div></div><div class="z" style="left:1892px;top:1682px;width:14px;background-color:#9c9e58"><div class="zt" style="left:1px;transform:scaleX(1.0387)">1</div></div><div class="z zn" style="left:1917.5px;top:1682px;width:6.5px;background-color:#9c9e58"></div><div class="z" style="left:2264px;top:1682px;width:228.5px;background-color:#9c9e58"><div class="zt" style="left:26.26px;transform:scaleX(1.0333)">1761853510.03</div></div><div class="z" style="left:2636px;top:1682px;width:221px;background-color:#9c9e58"><div class="zt" style="left:22.51px;transform:scaleX(1.0333)">1761853510.04</div></div><div class="z" style="left:3103.6px;top:1682px;width:14px;background-color:#9c9e58"><div class="zt" style="left:1px;transform:scaleX(1.0387)">1</div></div><div class="z zn" style="left:155.5px;top:1714px;width:4.5px;background-color:#969854"></div><div class="z zn" style="left:534.6px;top:1714px;width:4.4px;background-color:#969854"></div><div class="z zn" style="left:1519.5px;top:1714px;width:4.5px;background-color:#969854"></div><div class="z zn" style="left:1533px;top:1714px;width:4.5px;background-color:#969854"></div><div class="z zn" style="left:1894.7px;top:1714px;width:4.7px;background-color:#969854"></div><div class="z zn" style="left:1906px;top:1714px;width:4.8px;background-color:#969854"></div><div class="z zn" style="left:2493px;top:1714px;width:5px;background-color:#969854"></div><div class="z zn" style="left:2857px;top:1714px;width:4.6px;background-color:#969854"></div><div class="z zn" style="left:3105.6px;top:1714px;width:4.7px;background-color:#969854"></div><div class="z zn" style="left:3118px;top:1714px;width:5px;background-color:#969854"></div><div class="t lk" style="left:123px;top:1747.26px;font-size:18px;color:#e8877f;transform:scaleX(0.9469);">0: dbNew</div><div style="left:789px;top:1746px;width:6px;height:20px;background:#8e8c2a;"></div><div style="left:993px;top:1746px;width:6px;height:20px;background:#8e8c2a;"></div><div style="left:1745px;top:1746px;width:6px;height:20px;background:#8e8c2a;"></div><div style="left:1920.5px;top:1746px;width:6px;height:20px;background:#8e8c2a;"></div><div style="left:1995px;top:1746px;width:6px;height:20px;background:#8e8c2a;"></div><div style="left:1160px;top:1746px;width:6px;height:20px;background:#c02828;"></div><div style="left:1561px;top:1746px;width:6px;height:20px;background:#c02828;"></div><div class="t lk" style="left:123px;top:1769.26px;font-size:18px;color:#e8877f;transform:scaleX(0.9469);">1: dbNew</div><div style="left:727px;top:1768px;width:6px;height:20px;background:#8e8c2a;"></div><div class="tri" style="left:122px;top:1806px"></div><div class="t th" style="left:152px;top:1798.84px;font-size:25px;color:#fff;transform:scaleX(1.0570);">folk-worker-18</div><div style="left:122px;top:1824px;width:3116px;height:2px;background:#46463f;"></div><div style="left:122px;top:1853.2px;width:3116px;height:5px;background:#20e020;"></div><div class="dot" style="left:720.8px;top:1833.8px"></div><div class="dot" style="left:1370.8px;top:1833.8px"></div><div class="dot" style="left:1511.3px;top:1833.8px"></div><div class="dot" style="left:1739.4px;top:1833.8px"></div><div class="dot" style="left:2736.8px;top:1833.8px"></div><div class="z zn" style="left:158px;top:1868px;width:6px;background-color:#8b5faa"></div><div class="z zn" style="left:276px;top:1868px;width:6px;background-color:#8b5faa"></div><div class="z" style="left:305px;top:1868px;width:15.6px;background-color:#8b5faa"><div class="zt" style="left:1px;transform:scaleX(0.8578)">R</div></div><div class="z zn" style="left:323px;top:1868px;width:6px;background-color:#8b5faa"></div><div class="z" style="left:337px;top:1868px;width:14px;background-color:#8b5faa"></div><div class="z" style="left:351px;top:1868px;width:15px;background-color:#8b5faa"><div class="zt" style="left:1px;transform:scaleX(0.8578)">R</div></div><div class="z zn" style="left:424.6px;top:1868px;width:6px;background-color:#8b5faa"></div><div class="z zn" style="left:502px;top:1868px;width:6px;background-color:#8b5faa"></div><div class="z zn" style="left:533.6px;top:1868px;width:6px;background-color:#8b5faa"></div><div class="z zn" style="left:651px;top:1868px;width:6px;background-color:#8b5faa"></div><div class="z zn" style="left:726px;top:1868px;width:6px;background-color:#8b5faa"></div><div class="z" style="left:771px;top:1868px;width:219.6px;background-color:#8b5faa"><div class="zt" style="left:42.26px;transform:scaleX(0.9542)">RUN_WHEN</div></div><div class="z zn" style="left:993px;top:1868px;width:6px;background-color:#8b5faa"></div><div class="z zn" style="left:1026px;top:1868px;width:6px;background-color:#8b5faa"></div><div class="z zn" style="left:1100px;top:1868px;width:6px;background-color:#8b5faa"></div><div class="z" style="left:1145px;top:1868px;width:15px;background-color:#8b5faa"><div class="zt" style="left:1px;transform:scaleX(0.8578)">R</div></div><div class="z zn" style="left:1162px;top:1868px;width:6px;background-color:#8b5faa"></div><div class="z" style="left:1175px;top:1868px;width:13px;background-color:#8b5faa"></div><div class="z" style="left:1188px;top:1868px;width:16.6px;background-color:#8b5faa"><div class="zt" style="left:1px;transform:scaleX(0.8578)">R</div></div><div class="z zn" style="left:1247.7px;top:1868px;width:6px;background-color:#8b5faa"></div><div class="z zn" style="left:1326px;top:1868px;width:6px;background-color:#8b5faa"></div><div class="z zn" style="left:1376px;top:1868px;width:6px;background-color:#8b5faa"></div><div class="z zn" style="left:1399.5px;top:1868px;width:6px;background-color:#8b5faa"></div><div class="z zn" style="left:1518px;top:1868px;width:6px;background-color:#8b5faa"></div><div class="z zn" style="left:1533px;top:1868px;width:8px;background-color:#8b5faa"></div><div class="z" style="left:1541px;top:1868px;width:15px;background-color:#8b5faa"><div class="zt" style="left:1px;transform:scaleX(0.8578)">R</div></div><div class="z" style="left:1556px;top:1868px;width:15px;background-color:#8b5faa"><div class="zt" style="left:1px;transform:scaleX(0.8578)">R</div></div><div class="z zn" style="left:1571px;top:1868px;width:8px;background-color:#8b5faa"></div><div class="z zn" style="left:1621.5px;top:1868px;width:6px;background-color:#8b5faa"></div><div class="z zn" style="left:1745px;top:1868px;width:6px;background-color:#8b5faa"></div><div class="z zn" style="left:1774px;top:1868px;width:6px;background-color:#8b5faa"></div><div class="z zn" style="left:1847.6px;top:1868px;width:6px;background-color:#8b5faa"></div><div class="z" style="left:1890.7px;top:1868px;width:219.3px;background-color:#8b5faa"><div class="zt" style="left:42.11px;transform:scaleX(0.9542)">RUN_WHEN</div></div><div class="z" style="left:2264px;top:1868px;width:14.5px;background-color:#8b5faa"><div class="zt" style="left:1px;transform:scaleX(0.8578)">R</div></div><div class="z" style="left:2282px;top:1868px;width:13px;background-color:#8b5faa"><div class="zt" style="left:1px;transform:scaleX(0.8578)">R</div></div><div class="z" style="left:2295px;top:1868px;width:30px;background-color:#8b5faa"><div class="zt" style="left:7.92px;transform:scaleX(1.0387);color:#f0903c">9</div></div><div class="z zn" style="left:2372px;top:1868px;width:6px;background-color:#8b5faa"></div><div class="z zn" style="left:2447px;top:1868px;width:6px;background-color:#8b5faa"></div><div class="z zn" style="left:2495px;top:1868px;width:6px;background-color:#8b5faa"></div><div class="z" style="left:2653px;top:1868px;width:14.7px;background-color:#8b5faa"><div class="zt" style="left:1.03px;transform:scaleX(0.8446)">F</div></div><div class="z" style="left:2667.7px;top:1868px;width:15.3px;background-color:#8b5faa"><div class="zt" style="left:1.33px;transform:scaleX(0.8446)">F</div></div><div class="z" style="left:2687.7px;top:1868px;width:13.3px;background-color:#8b5faa"></div><div class="z zn" style="left:2741.6px;top:1868px;width:6px;background-color:#8b5faa"></div><div class="z zn" style="left:2856px;top:1868px;width:6px;background-color:#8b5faa"></div><div class="z zn" style="left:2894.7px;top:1868px;width:6px;background-color:#8b5faa"></div><div class="z zn" style="left:2969.6px;top:1868px;width:6px;background-color:#8b5faa"></div><div class="z" style="left:3102px;top:1868px;width:232px;background-color:#8b5faa"><div class="zt" style="left:48.46px;transform:scaleX(0.9542)">RUN_WHEN</div></div><div class="z" style="left:305px;top:1900px;width:15.6px;background-color:#865ca4"><div class="zt" style="left:1px;transform:scaleX(1.0387)">8</div></div><div class="z" style="left:348.7px;top:1900px;width:12.1px;background-color:#865ca4"><div class="zt" style="left:1px;transform:scaleX(1.0387)">1</div></div><div class="z" style="left:771px;top:1900px;width:219.6px;background-color:#865ca4"><div class="zt" style="left:95.65px;transform:scaleX(1.0387)">70</div></div><div class="z" style="left:1145px;top:1900px;width:15px;background-color:#865ca4"><div class="zt" style="left:1px;transform:scaleX(1.0387)">8</div></div><div class="z" style="left:1188px;top:1900px;width:10.6px;background-color:#865ca4"><div class="zt" style="left:1px;transform:scaleX(1.0387)">1</div></div><div class="z" style="left:1541px;top:1900px;width:10px;background-color:#865ca4"><div class="zt" style="left:1px;transform:scaleX(1.0387)">6</div></div><div class="z" style="left:1556px;top:1900px;width:15px;background-color:#865ca4"><div class="zt" style="left:1px;transform:scaleX(1.0387)">1</div></div><div class="z" style="left:1890.7px;top:1900px;width:219.3px;background-color:#865ca4"><div class="zt" style="left:95.5px;transform:scaleX(1.0387)">70</div></div><div class="z" style="left:2264px;top:1900px;width:14.5px;background-color:#865ca4"><div class="zt" style="left:1px;transform:scaleX(1.0387)">8</div></div><div class="z zn" style="left:2288.5px;top:1900px;width:8.5px;background-color:#865ca4"><div class="zt" style="left:1px;transform:scaleX(1.0387)">6</div></div><div class="z zn" style="left:2661px;top:1900px;width:9px;background-color:#865ca4"><div class="zt" style="left:1px;transform:scaleX(1.0387)">6</div></div><div class="z" style="left:2673px;top:1900px;width:10px;background-color:#865ca4"><div class="zt" style="left:1px;transform:scaleX(1.0387)">7</div></div><div class="z" style="left:3102px;top:1900px;width:232px;background-color:#865ca4"><div class="zt" style="left:101.85px;transform:scaleX(1.0387)">70</div></div><div class="z" style="left:306.6px;top:1932px;width:14px;background-color:#81599e"><div class="zt" style="left:1px;transform:scaleX(1.0387)">1</div></div><div class="z zn" style="left:356px;top:1932px;width:6px;background-color:#81599e"></div><div class="z" style="left:771px;top:1932px;width:219.6px;background-color:#81599e"><div class="zt" style="left:21.81px;transform:scaleX(1.0333)">1761853509.96</div></div><div class="z" style="left:1146px;top:1932px;width:14px;background-color:#81599e"><div class="zt" style="left:1px;transform:scaleX(1.0387)">1</div></div><div class="z zn" style="left:1194.5px;top:1932px;width:6.5px;background-color:#81599e"></div><div class="z zn" style="left:1543px;top:1932px;width:7px;background-color:#81599e"></div><div class="z zn" style="left:1567.6px;top:1932px;width:6.4px;background-color:#81599e"></div><div class="z" style="left:1890.7px;top:1932px;width:219.3px;background-color:#81599e"><div class="zt" style="left:21.66px;transform:scaleX(1.0333)">1761853510.01</div></div><div class="z" style="left:2265px;top:1932px;width:13.5px;background-color:#81599e"><div class="zt" style="left:1px;transform:scaleX(1.0387)">1</div></div><div class="z zn" style="left:2290px;top:1932px;width:5px;background-color:#81599e"></div><div class="z zn" style="left:2662px;top:1932px;width:7px;background-color:#81599e"></div><div class="z zn" style="left:2681.7px;top:1932px;width:6px;background-color:#81599e"></div><div class="z" style="left:3102px;top:1932px;width:232px;background-color:#81599e"><div class="zt" style="left:28.01px;transform:scaleX(1.0333)">1761853510.08</div></div><div style="left:112px;top:1950px;width:3126px;height:57px;background:#22231e;"></div><div style="left:112px;top:133px;width:1.5px;height:1874px;background:#3a3a36;"></div><div style="left:3236.5px;top:133px;width:1.5px;height:1874px;background:#3a3a36;"></div><div style="left:1118px;top:300px;width:2px;height:1650px;background:rgba(255,255,255,0.17);"></div><svg style="position:absolute;left:0;top:0" width="3350" height="2156" viewBox="0 0 3350 2156"><path d="M125.8 441L128.8 437L131.8 441M274 441L277 437L280 441M348.4 441L351.4 437L354.4 441M423 441L426 437L429 441M499.5 441L502.5 437L505.5 441M523.6 441L526.6 437L529.6 441M574.4 441L577.4 437L580.4 441M649 441L652 437L655 441M723.5 441L726.5 437L729.5 441M798.4 441L801.4 437L804.4 441M872 441L875 437L878 441M948 441L951 437L954 441M990 441L993 437L996 441M1023.7 441L1026.7 437L1029.7 441M1098 441L1101 437L1104 441M1172 441L1175 437L1178 441M1246 441L1249 437L1252 441M1322 441L1325 437L1328 441M1397.5 441L1400.5 437L1403.5 441M1457.7 441L1460.7 437L1463.7 441M1472.3 441L1475.3 437L1478.3 441M1545 441L1548 437L1551 441M1619.5 441L1622.5 437L1625.5 441M1696.5 441L1699.5 437L1702.5 441M1749.3 441L1752.3 437L1755.3 441M1771.4 441L1774.4 437L1777.4 441M1843.6 441L1846.6 437L1849.6 441M1919 441L1922 437L1925 441M1938 441L1941 437L1944 441M1992.7 441L1995.7 437L1998.7 441M2030.8 441L2033.8 437L2036.8 441M2069 441L2072 437L2075 441M2122.4 441L2125.4 437L2128.4 441M2144.5 441L2147.5 437L2150.5 441M2217.3 441L2220.3 437L2223.3 441M2293 441L2296 437L2299 441M2310.3 441L2313.3 437L2316.3 441M2366.5 441L2369.5 437L2372.5 441M2392.5 441L2395.5 437L2398.5 441M2404 441L2407 437L2410 441M2442.7 441L2445.7 437L2448.7 441M2494.8 441L2497.8 437L2500.8 441M2517.6 441L2520.6 437L2523.6 441M2592.4 441L2595.4 437L2598.4 441M2666.7 441L2669.7 437L2672.7 441M2684 441L2687 437L2690 441M2741 441L2744 437L2747 441M2776.3 441L2779.3 437L2782.3 441M2817.8 441L2820.8 437L2823.8 441M2860.5 441L2863.5 437L2866.5 441M2868.6 441L2871.6 437L2874.6 441M2892 441L2895 437L2898 441M2966 441L2969 437L2972 441M3041 441L3044 437L3047 441M3055 441L3058 437L3061 441M3114.6 441L3117.6 437L3120.6 441M3149.4 441L3152.4 437L3155.4 441M3188.8 441L3191.8 437L3194.8 441M232.7 463L235.7 459L238.7 463M282.2 463L285.2 459L288.2 463M402.6 463L405.6 459L408.6 463M446 463L449 459L452 463M467.4 463L470.4 459L473.4 463M611.2 463L614.2 459L617.2 463M637.3 463L640.3 459L643.3 463M702 463L705 459L708 463M777 463L780 459L783 463M872 463L875 459L878 463M937.5 463L940.5 459L943.5 463M1106.6 463L1109.6 459L1112.6 463M1171.5 463L1174.5 459L1177.5 463M1272.5 463L1275.5 459L1278.5 463M1339.3 463L1342.3 459L1345.3 463M1406.2 463L1409.2 459L1412.2 463M1436.3 463L1439.3 459L1442.3 463M1574 463L1577 459L1580 463M1601.4 463L1604.4 459L1607.4 463M1641.5 463L1644.5 459L1647.5 463M1766.7 463L1769.7 459L1772.7 463M1809.5 463L1812.5 459L1815.5 463M1875.7 463L1878.7 459L1881.7 463M1931.8 463L1934.8 459L1937.8 463M2044.2 463L2047.2 459L2050.2 463M2096.3 463L2099.3 459L2102.3 463M2109.7 463L2112.7 459L2115.7 463M2261.5 463L2264.5 459L2267.5 463M2278.2 463L2281.2 459L2284.2 463M2344.4 463L2347.4 459L2350.4 463M2426.6 463L2429.6 459L2432.6 463M2512.9 463L2515.9 459L2518.9 463M2578.4 463L2581.4 459L2584.4 463M2593 463L2596 459L2599 463M2747 463L2750 459L2753 463M2758.3 463L2761.3 459L2764.3 463M2814.4 463L2817.4 459L2820.4 463M2921.4 463L2924.4 459L2927.4 463M2982.3 463L2985.3 459L2988.3 463M3048.5 463L3051.5 459L3054.5 463M3086 463L3089 459L3092 463M3216.3 463L3219.3 459L3222.3 463M1279.8 507L1282.8 503L1285.8 507M2446.7 507L2449.7 503L2452.7 507M253.5 529L256.5 525L259.5 529M487.5 529L490.5 525L493.5 529M521.6 529L524.6 525L527.6 529M886 529L889 525L892 529M1120 529L1123 525L1126 529M1225 529L1228 525L1231 529M1459.7 529L1462.7 525L1465.7 529M1493 529L1496 525L1499 529M1857.6 529L1860.6 525L1863.6 529M2092.3 529L2095.3 525L2098.3 529M2196.6 529L2199.6 525L2202.6 529M2431.3 529L2434.3 525L2437.3 529M2463.4 529L2466.4 525L2469.4 529M2826.5 529L2829.5 525L2832.5 529M3061.8 529L3064.8 525L3067.8 529M3166.8 529L3169.8 525L3172.8 529M422 592L425 588L428 592M421.5 608.5L425 603.5L428.5 608.5M500.9 592L503.9 588L506.9 592M500.4 608.5L503.9 603.5L507.4 608.5M870.6 592L873.6 588L876.6 592M870.1 608.5L873.6 603.5L877.1 608.5M1245 592L1248 588L1251 592M1244.5 608.5L1248 603.5L1251.5 608.5M1618.2 592L1621.2 588L1624.2 592M1617.7 608.5L1621.2 603.5L1624.7 608.5M2069.6 592L2072.6 588L2075.6 592M2069.1 608.5L2072.6 603.5L2076.1 608.5M2365 592L2368 588L2371 592M2364.5 608.5L2368 603.5L2371.5 608.5M2443.4 592L2446.4 588L2449.4 592M2442.9 608.5L2446.4 603.5L2449.9 608.5M2738.9 592L2741.9 588L2744.9 592M2738.4 608.5L2741.9 603.5L2745.4 608.5M2280 1136L2283 1132L2286 1136" fill="none" stroke="#8a8a84" stroke-width="1.3"/><path d="M128.9 632L131.4 629L133.9 632M203.1 632L205.6 629L208.1 632M276.7 632L279.2 629L281.7 632M350.2 632L352.7 629L355.2 632M424.5 632L427 629L429.5 632M503.4 632L505.9 629L508.4 632M578.2 632L580.7 629L583.2 632M652.5 632L655 629L657.5 632M726 632L728.5 629L731 632M800.9 632L803.4 629L805.9 632M873.1 632L875.6 629L878.1 632M952 632L954.5 629L957 632M1026.2 632L1028.7 629L1031.2 632M1101.1 632L1103.6 629L1106.1 632M1175.3 632L1177.8 629L1180.3 632M1247.5 632L1250 629L1252.5 632M1325.1 632L1327.6 629L1330.1 632M1400 632L1402.5 629L1405 632M1474.2 632L1476.7 629L1479.2 632M1549.1 632L1551.6 629L1554.1 632M1620.7 632L1623.2 629L1625.7 632M1700.5 632L1703 629L1705.5 632M1774.5 632L1777 629L1779.5 632M1848.1 632L1850.6 629L1853.1 632M1922.3 632L1924.8 629L1927.3 632M1993.9 632L1996.4 629L1998.9 632M2072.1 632L2074.6 629L2077.1 632M2147 632L2149.5 629L2152 632M2221.2 632L2223.7 629L2226.2 632M2295.4 632L2297.9 629L2300.4 632M2367.5 632L2370 629L2372.5 632M2445.9 632L2448.4 629L2450.9 632M2520 632L2522.5 629L2525 632M2594.9 632L2597.4 629L2599.9 632M2669.2 632L2671.7 629L2674.2 632M2741.4 632L2743.9 629L2746.4 632M2820.3 632L2822.8 629L2825.3 632M2895.2 632L2897.7 629L2900.2 632M2969.4 632L2971.9 629L2974.4 632M3044.3 632L3046.8 629L3049.3 632M3117.2 632L3119.7 629L3122.2 632M3190.7 632L3193.2 629L3195.7 632M1175.5 661L1178 658.5L1180.5 661M304.6 860L307.1 857L309.6 860M770.6 860L773.1 857L775.6 860M1144.4 860L1146.9 857L1149.4 860M1516.8 860L1519.3 857L1521.8 860M1890.7 860L1893.2 857L1895.7 860M2263.8 860L2266.3 857L2268.8 860M2637 860L2639.5 857L2642 860M3101.6 860L3104.1 857L3106.6 860M614.5 1066L617 1063L619.5 1066M1584.5 1066L1587 1063L1589.5 1066M2556.5 1066L2559 1063L2561.5 1066M129 1176L131.5 1173L134 1176M156.5 1176L159 1173L161.5 1176M278 1176L280.5 1173L283 1176M343.5 1176L346 1173L348.5 1176M357.5 1176L360 1173L362.5 1176M502.5 1176L505 1173L507.5 1176M536.1 1176L538.6 1173L541.1 1176M726 1176L728.5 1173L731 1176M873.5 1176L876 1173L878.5 1176M952 1176L954.5 1173L957 1176M1378.5 1176L1381 1173L1383.5 1176M1400 1176L1402.5 1173L1405 1176M1557.1 1176L1559.6 1173L1562.1 1176M1622 1176L1624.5 1173L1627 1176M1700.5 1176L1703 1173L1705.5 1176M1746.5 1176L1749 1173L1751.5 1176M1848.1 1176L1850.6 1173L1853.1 1176M1890.5 1176L1893 1173L1895.5 1176M1908.5 1176L1911 1173L1913.5 1176M2071.5 1176L2074 1173L2076.5 1176M2111.5 1176L2114 1173L2116.5 1176M2295.5 1176L2298.5 1173L2301.5 1176M2314.5 1176L2317 1173L2319.5 1176M2367.5 1176L2370 1173L2372.5 1176M2493.5 1176L2496 1173L2498.5 1176M2520.5 1176L2523 1173L2525.5 1176M2637.1 1176L2639.6 1173L2642.1 1176M2689.5 1176L2692 1173L2694.5 1176M2742 1176L2744.5 1173L2747 1176M2820.5 1176L2823 1173L2825.5 1176M2859 1176L2861.5 1173L2864 1176M3192.5 1176L3195 1173L3197.5 1176M332.5 1240L335 1237L337.5 1240M799.2 1240L801.85 1237L804.5 1240M824.5 1240L826.75 1237L829 1240M1544.5 1240L1547 1237L1549.5 1240M1583.5 1240L1585.5 1237L1587.5 1240M1930.5 1240L1933 1237L1935.5 1240M2311.5 1240L2313.5 1237L2315.5 1240M2663.5 1240L2666.5 1237L2669.5 1240M2673.5 1240L2676.5 1237L2679.5 1240M3129.5 1240L3131.5 1237L3133.5 1240M3146.5 1240L3149 1237L3151.5 1240M1377.5 1272L1379.5 1269L1381.5 1272M322.1 1301L324.6 1298.5L327.1 1301M875.1 1301L877.6 1298.5L880.1 1301M1561.5 1301L1564 1298.5L1566.5 1301M1908.5 1301L1911 1298.5L1913.5 1301M2744 1301L2746.5 1298.5L2749 1301M155.5 1301L158 1298.5L160.5 1301M789.5 1301L792 1298.5L794.5 1301M1547.1 1301L1549.6 1298.5L1552.1 1301M2280.5 1301L2283 1298.5L2285.5 1301M2495.5 1301L2498 1298.5L2500.5 1301M2652.5 1301L2655 1298.5L2657.5 1301M3119.5 1301L3122 1298.5L3124.5 1301M156.3 1404L158.8 1401L161.3 1404M278 1404L280.5 1401L283 1404M306.1 1404L308.6 1401L311.1 1404M425.1 1404L427.6 1401L430.1 1404M502.5 1404L505 1401L507.5 1404M534.1 1404L536.6 1401L539.1 1404M873.5 1404L876 1401L878.5 1404M954 1404L956.5 1401L959 1404M990.5 1404L993 1401L995.5 1404M1247.5 1404L1250 1401L1252.5 1404M1375.5 1404L1378 1401L1380.5 1404M1402 1404L1404.5 1401L1407 1404M1474.5 1404L1477 1401L1479.5 1404M1909.5 1404L1912.5 1401L1915.5 1404M1993.5 1404L1996 1401L1998.5 1404M2072.1 1404L2074.6 1401L2077.1 1404M2113.5 1404L2116 1401L2118.5 1404M2147 1404L2149.5 1401L2152 1404M2221.2 1404L2223.7 1401L2226.2 1404M2264 1404L2266.5 1401L2269 1404M2279.3 1404L2283.4 1401L2287.5 1404M2368.5 1404L2371 1401L2373.5 1404M2493.5 1404L2496 1401L2498.5 1404M2521.5 1404L2524 1401L2526.5 1404M2594.9 1404L2597.4 1401L2599.9 1404M2656.5 1404L2658.5 1401L2660.5 1404M2746.1 1404L2748.6 1401L2751.1 1404M2857.1 1404L2859.6 1401L2862.1 1404M2968.5 1404L2971 1401L2973.5 1404M3101.5 1404L3104 1401L3106.5 1404M3192.1 1404L3194.6 1401L3197.1 1404M331.2 1468L333.7 1465L336.2 1468M1170.3 1468L1173.8 1465L1177.3 1468M1918 1468L1920.75 1465L1923.5 1468M1939.5 1468L1941.5 1465L1943.5 1468M2290.5 1468L2293.5 1465L2296.5 1468M2303.5 1468L2306 1465L2308.5 1468M2688.2 1468L2690.35 1465L2692.5 1468M3129.5 1468L3132.35 1465L3135.2 1468M3150.2 1468L3152.35 1465L3154.5 1468M774.5 1500L776.65 1497L778.8 1500M787.2 1500L789.7 1497L792.2 1500M1744.8 1500L1746.95 1497L1749.1 1500M2640.1 1500L2642.3 1497L2644.5 1500M2652.1 1500L2653.8 1497L2655.5 1500M156.5 1529L159 1526.5L161.5 1529M1160.5 1529L1163 1526.5L1165.5 1529M1378 1529L1380.5 1526.5L1383 1529M2281.5 1529L2284 1526.5L2286.5 1529M2495.5 1529L2498 1526.5L2500.5 1529M3119.5 1529L3122 1526.5L3124.5 1529M322.2 1529L324.7 1526.5L327.2 1529M425.8 1529L428.3 1526.5L430.8 1529M536.1 1529L538.6 1526.5L541.1 1529M875.1 1529L877.6 1526.5L880.1 1529M993.5 1529L996 1526.5L998.5 1529M1176 1529L1178.5 1526.5L1181 1529M1908.5 1529L1911 1526.5L1913.5 1529M1921.5 1529L1924 1526.5L1926.5 1529M1995.5 1529L1998 1526.5L2000.5 1529M2293.5 1529L2296 1526.5L2298.5 1529M2857.5 1529L2860 1526.5L2862.5 1529M203.1 1632L205.6 1629L208.1 1632M279.5 1632L282 1629L284.5 1632M577.5 1632L580 1629L582.5 1632M727.5 1632L730 1629L732.5 1632M772.1 1632L774.6 1629L777.1 1632M826.5 1632L829 1629L831.5 1632M952 1632L954.5 1629L957 1632M991.5 1632L994 1629L996.5 1632M1145.2 1632L1147.7 1629L1150.2 1632M1197.5 1632L1200 1629L1202.5 1632M1400 1632L1402.5 1629L1405 1632M1534.5 1632L1537.5 1629L1540.5 1632M1571.2 1632L1573.7 1629L1576.2 1632M1625.5 1632L1628 1629L1630.5 1632M1745.5 1632L1748 1629L1750.5 1632M1848.1 1632L1850.6 1629L1853.1 1632M1993.5 1632L1996 1629L1998.5 1632M2072.1 1632L2074.6 1629L2077.1 1632M2111.5 1632L2114 1629L2116.5 1632M2520.5 1632L2523 1629L2525.5 1632M2970.1 1632L2972.6 1629L2975.1 1632M3044.2 1632L3046.7 1629L3049.2 1632M3121.5 1632L3124.35 1629L3127.2 1632M3192.5 1632L3195 1629L3197.5 1632M799.2 1696L801.05 1693L802.9 1696M1170.3 1696L1172.4 1693L1174.5 1696M1918 1696L1920.75 1693L1923.5 1696M156 1728L157.75 1725L159.5 1728M535.1 1728L536.8 1725L538.5 1728M1520 1728L1521.75 1725L1523.5 1728M1533.5 1728L1535.25 1725L1537 1728M1895.2 1728L1897.05 1725L1898.9 1728M1906.5 1728L1908.4 1725L1910.3 1728M2493.5 1728L2495.5 1725L2497.5 1728M2857.5 1728L2859.3 1725L2861.1 1728M3106.1 1728L3107.95 1725L3109.8 1728M3118.5 1728L3120.5 1725L3122.5 1728M789.5 1757L792 1754.5L794.5 1757M993.5 1757L996 1754.5L998.5 1757M1745.5 1757L1748 1754.5L1750.5 1757M1921 1757L1923.5 1754.5L1926 1757M1995.5 1757L1998 1754.5L2000.5 1757M1160.5 1757L1163 1754.5L1165.5 1757M1561.5 1757L1564 1754.5L1566.5 1757M727.5 1779L730 1776.5L732.5 1779M158.5 1882L161 1879L163.5 1882M276.5 1882L279 1879L281.5 1882M323.5 1882L326 1879L328.5 1882M425.1 1882L427.6 1879L430.1 1882M502.5 1882L505 1879L507.5 1882M534.1 1882L536.6 1879L539.1 1882M651.5 1882L654 1879L656.5 1882M726.5 1882L729 1879L731.5 1882M993.5 1882L996 1879L998.5 1882M1026.5 1882L1029 1879L1031.5 1882M1100.5 1882L1103 1879L1105.5 1882M1162.5 1882L1165 1879L1167.5 1882M1248.2 1882L1250.7 1879L1253.2 1882M1326.5 1882L1329 1879L1331.5 1882M1376.5 1882L1379 1879L1381.5 1882M1400 1882L1402.5 1879L1405 1882M1518.5 1882L1521 1879L1523.5 1882M1533.5 1882L1537 1879L1540.5 1882M1571.5 1882L1575 1879L1578.5 1882M1622 1882L1624.5 1879L1627 1882M1745.5 1882L1748 1879L1750.5 1882M1774.5 1882L1777 1879L1779.5 1882M1848.1 1882L1850.6 1879L1853.1 1882M2372.5 1882L2375 1879L2377.5 1882M2447.5 1882L2450 1879L2452.5 1882M2495.5 1882L2498 1879L2500.5 1882M2742.1 1882L2744.6 1879L2747.1 1882M2856.5 1882L2859 1879L2861.5 1882M2895.2 1882L2897.7 1879L2900.2 1882M2970.1 1882L2972.6 1879L2975.1 1882M356.5 1946L359 1943L361.5 1946M1195 1946L1197.75 1943L1200.5 1946M1543.5 1946L1546.5 1943L1549.5 1946M1568.1 1946L1570.8 1943L1573.5 1946M2290.5 1946L2292.5 1943L2294.5 1946M2662.5 1946L2665.5 1943L2668.5 1946M2682.2 1946L2684.7 1943L2687.2 1946" fill="none" stroke="rgba(0,0,0,0.28)" stroke-width="1.3"/><path d="M127.9 156.5 A21 21 0 0 1 163.1 156.5" fill="none" stroke="#fff" stroke-width="4" stroke-linecap="round"/><path d="M135 160.3 A13 13 0 0 1 156 160.3" fill="none" stroke="#fff" stroke-width="4" stroke-linecap="round"/><circle cx="145.5" cy="168" r="4" fill="#fff"/><path d="M208 149.5 L225.5 159.5 L208 170 Z" fill="#fff" stroke="#fff" stroke-width="3" stroke-linejoin="round"/><rect x="380.75" y="146.50" width="6.5" height="27" rx="1.5" fill="#fff" transform="rotate(0 384 160)"/><rect x="380.75" y="146.50" width="6.5" height="27" rx="1.5" fill="#fff" transform="rotate(60 384 160)"/><rect x="380.75" y="146.50" width="6.5" height="27" rx="1.5" fill="#fff" transform="rotate(120 384 160)"/><rect x="380.75" y="146.50" width="6.5" height="27" rx="1.5" fill="#fff" transform="rotate(180 384 160)"/><rect x="380.75" y="146.50" width="6.5" height="27" rx="1.5" fill="#fff" transform="rotate(240 384 160)"/><rect x="380.75" y="146.50" width="6.5" height="27" rx="1.5" fill="#fff" transform="rotate(300 384 160)"/><circle cx="384" cy="160" r="10" fill="#fff"/><circle cx="384" cy="160" r="4.6" fill="#2d5078"/><path d="M431 150 Q431 148 433 148 L442 148 L454 160 Q455 161 454 162 L445 171 Q444 172 443 171 L431 159 Z" fill="#fff"/><circle cx="436" cy="152.5" r="2" fill="#2d5078"/><path d="M448 148.5 L459 160 Q460 161 459 162 L449.5 171.5" fill="none" stroke="#fff" stroke-width="2.6" stroke-linecap="round"/><circle cx="620.5" cy="156" r="8.3" fill="none" stroke="#fff" stroke-width="4"/><path d="M627 162.5 L635.5 171.5" stroke="#fff" stroke-width="4.5" stroke-linecap="round"/><path d="M735 171 L735 150" stroke="#fff" stroke-width="3.5" stroke-linecap="round"/><path d="M729.5 156 L735 149 L740.5 156" fill="none" stroke="#fff" stroke-width="3.5" stroke-linecap="round" stroke-linejoin="round"/><path d="M745 149 L758.5 149" stroke="#fff" stroke-width="3.6" stroke-linecap="round"/><path d="M745 155.5 L755 155.5" stroke="#fff" stroke-width="3.6" stroke-linecap="round"/><path d="M745 162 L751.5 162" stroke="#fff" stroke-width="3.6" stroke-linecap="round"/><path d="M745 168.5 L748 168.5" stroke="#fff" stroke-width="3.6" stroke-linecap="round"/><path d="M914.5 145.2 C915.5 150 919 153 922 156.5 C924.5 159.5 925 162 925 164 C925 169.5 920.5 174 914.5 174 C908.5 174 904 169.5 904 164 C904 160.5 905.5 157.5 908.3 155 L909.2 162 C909.5 164 911 165 912.5 165 C914.5 165 916 163.5 916 161.5 C916 159.5 914.5 158 912.5 156 C910.5 154 910.5 150 914.5 145.2 Z" fill="#fff"/><path d="M1036.0 148.5 H1068.0 V153.5 Q1066.5 155.5 1068.0 157.5 V162.5 H1036.0 V157.5 Q1037.5 155.5 1036.0 153.5 Z" fill="#fff"/><rect x="1043.0" y="152.0" width="3.5" height="7.0" fill="#2d5078"/><rect x="1050.0" y="152.0" width="3.5" height="7.0" fill="#2d5078"/><rect x="1057.0" y="152.0" width="3.5" height="7.0" fill="#2d5078"/><rect x="1036.0" y="164.5" width="32.0" height="6.0" fill="#fff"/><rect x="1043.5" y="167.5" width="1.5" height="3.0" fill="#2d5078"/><rect x="1051.5" y="167.5" width="1.5" height="3.0" fill="#2d5078"/><rect x="1059.5" y="167.5" width="1.5" height="3.0" fill="#2d5078"/><path d="M1209 148.5 H1234" stroke="#fff" stroke-width="3.5" stroke-linecap="round"/><circle cx="1222" cy="147.8" r="3" fill="#fff"/><path d="M1222 148 V172" stroke="#fff" stroke-width="3.5"/><path d="M1212 172.5 H1232" stroke="#fff" stroke-width="3.5" stroke-linecap="round"/><path d="M1210.5 152 L1205 163.5 M1210.5 152 L1216 163.5" stroke="#fff" stroke-width="2.2" fill="none"/><path d="M1204 163 Q1210.5 171 1217 163 Z" fill="#fff"/><path d="M1233 152 L1227.5 163.5 M1233 152 L1238.5 163.5" stroke="#fff" stroke-width="2.2" fill="none"/><path d="M1226.5 163 Q1233 171 1239.5 163 Z" fill="#fff"/><path d="M1387.3 161 A13.5 13.5 0 0 1 1410.8 152.5 M1412.6 157 L1412.6 160.5 M1390.5 166 C1390.5 160 1391 157 1393.5 153.5 M1396.5 151.5 A9.3 9.3 0 0 1 1408.8 159 L1408.6 166.5 M1395 168.3 L1395.2 160 A4.6 4.6 0 0 1 1404.2 160 L1403.7 168.5 M1400 159 L1398.3 172.7" fill="none" stroke="#fff" stroke-width="2.6" stroke-linecap="round"/><path d="M1502 148 L1508 154" stroke="#fff" stroke-width="6"/><path d="M1508 154 L1516 162" stroke="#fff" stroke-width="2.6"/><path d="M1518.5 164.5 L1526 172" stroke="#fff" stroke-width="7.5" stroke-linecap="round"/><circle cx="1521" cy="153.5" r="7.6" fill="#fff"/><path d="M1518.8 154.8 L1518.8 148.5 L1524.5 142.5 L1531 142.5 L1531 150 L1525.5 154.8 Z" fill="#2d5078"/><path d="M1503.5 170 L1513 160.5" stroke="#fff" stroke-width="6.5" stroke-linecap="round"/><circle cx="1503.5" cy="170" r="1.4" fill="#2d5078"/><circle cx="1570.5" cy="157" r="9" fill="none" stroke="#fff" stroke-width="4.2"/><path d="M1570.5 152 V162 M1565.5 157 H1575.5" stroke="#fff" stroke-width="2.6"/><path d="M1577.5 164 L1587 173" stroke="#fff" stroke-width="4.5" stroke-linecap="round"/><path d="M1628 161 L1634.5 153 L1634.5 169 Z" fill="#fff" stroke="#fff" stroke-width="2" stroke-linejoin="round"/><path d="M1828.5 161 L1822 153 L1822 169 Z" fill="#fff" stroke="#fff" stroke-width="2" stroke-linejoin="round"/><path d="M1873 151.5 L1893.5 151.5 L1883.2 170 Z" fill="#fff"/><path d="M1936 159.5 Q1951.5 138 1967.5 159.5 Q1951.5 181 1936 159.5 Z" fill="#fff"/><circle cx="1952" cy="160" r="6.5" fill="none" stroke="#22231e" stroke-width="2.4"/><path d="M1947.5 160.5 A4.5 4.5 0 0 0 1956 158.5" fill="none" stroke="#22231e" stroke-width="0"/><ellipse cx="2134.2" cy="150.5" rx="12.8" ry="4.8" fill="#fff"/><rect x="2121.4" y="150.5" width="25.6" height="18" fill="#fff"/><ellipse cx="2134.2" cy="168.5" rx="12.8" ry="4.8" fill="#fff"/><path d="M2121.4 156.5 Q2134.2 162 2147 156.5 M2121.4 163.5 Q2134.2 169 2147 163.5" fill="none" stroke="#22231e" stroke-width="1.4"/><path d="M2307.5 149.0 H2340.0 V153.8 Q2338.5 155.7 2340.0 157.6 V162.4 H2307.5 V157.6 Q2309.0 155.7 2307.5 153.8 Z" fill="#fff"/><rect x="2314.6" y="152.3" width="3.6" height="6.7" fill="#2d5078"/><rect x="2321.7" y="152.3" width="3.6" height="6.7" fill="#2d5078"/><rect x="2328.8" y="152.3" width="3.6" height="6.7" fill="#2d5078"/><rect x="2307.5" y="164.3" width="32.5" height="5.7" fill="#fff"/><rect x="2315.1" y="167.1" width="1.5" height="2.9" fill="#2d5078"/><rect x="2323.2" y="167.1" width="1.5" height="2.9" fill="#2d5078"/><rect x="2331.4" y="167.1" width="1.5" height="2.9" fill="#2d5078"/><path d="M2650 155.5 A14 14 0 0 0 2666 172 Z" fill="#ff0000"/><path d="M2650 155.5 L2666 172" stroke="#ff0000" stroke-width="2"/><path d="M2658 163.5 L2664 157.5" stroke="#ff0000" stroke-width="2.5" stroke-linecap="round"/><path d="M2662.5 150.5 A10 10 0 0 1 2671 159" fill="none" stroke="#ff0000" stroke-width="2.8" stroke-linecap="round"/><path d="M2662.5 145.5 A15 15 0 0 1 2676 159" fill="none" stroke="#ff0000" stroke-width="2.8" stroke-linecap="round"/></svg></div></body></html>
